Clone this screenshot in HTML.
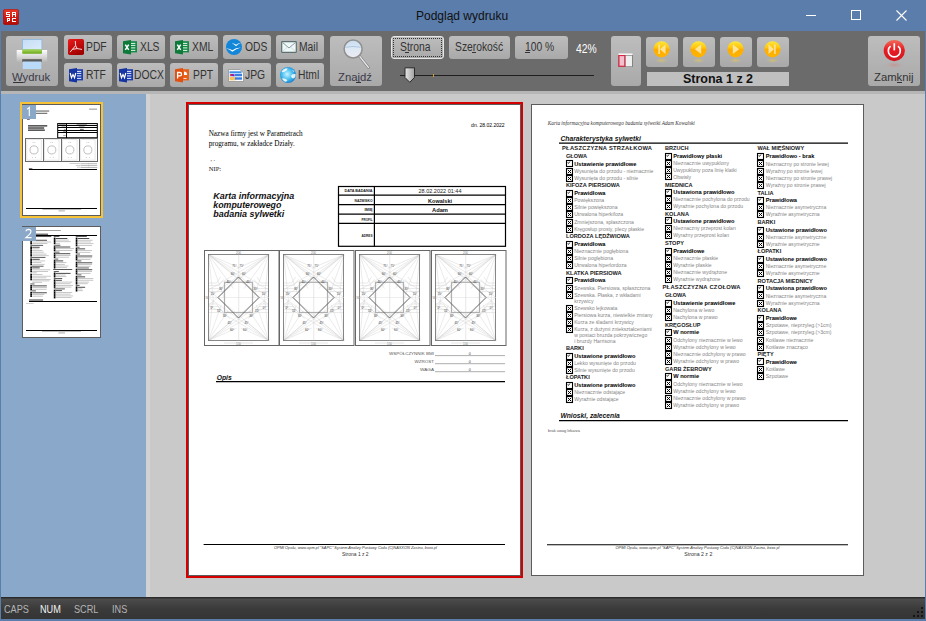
<!DOCTYPE html><html><head><meta charset="utf-8"><style>
*{margin:0;padding:0;box-sizing:border-box}
html,body{width:926px;height:621px;overflow:hidden;background:#5b7dab;font-family:"Liberation Sans",sans-serif}
.a{position:absolute}
#title{left:0;top:0;width:926px;height:31px;background:#5b7dab}
#tb{left:1px;top:31px;width:924px;height:60px;background:#6b6b6b}
.btn{position:absolute;border-radius:3px;background:linear-gradient(#bdbdbd,#a9a9a9);}
.bl{position:absolute;font-size:12px;color:#333;white-space:nowrap;line-height:14px;transform:scaleX(0.86);transform-origin:0 0}
#strip{left:1px;top:91px;width:924px;height:3px;background:#b6b6b6}
#left{left:1px;top:94px;width:145px;height:503px;background:#8aa8c9}
#split{left:146px;top:94px;width:4px;height:503px;background:#d2d2d2}
#main{left:150px;top:94px;width:775px;height:503px;background:#c9c9c9}
#status{left:1px;top:597px;width:924px;height:22px;background:linear-gradient(#2b2b2b 0,#2b2b2b 1px,#4c4c4c 2px,#3a3a3a 12px,#343434 100%)}
.st{position:absolute;top:603px;font-size:11px;color:#b5b5b5;line-height:12px;transform:scaleX(0.83);transform-origin:0 0}
.page{position:absolute;background:#fff;border:1px solid #5a5a5a;width:333px;height:472px;overflow:hidden}
</style></head><body>
<div class="a" id="title"></div>
<svg class="a" style="left:3px;top:9px" width="16" height="16" viewBox="0 0 16 16">
<defs><linearGradient id="ig" x1="0" y1="0" x2="0" y2="1"><stop offset="0" stop-color="#e83a26"/><stop offset="0.5" stop-color="#d41a10"/><stop offset="1" stop-color="#b00c06"/></linearGradient></defs>
<rect x="0.3" y="0.3" width="15.4" height="15.4" rx="2.2" fill="url(#ig)" stroke="#a00a05" stroke-width="0.6"/>
<g fill="#fff" shape-rendering="crispEdges">
<rect x="3" y="3" width="4" height="1"/><rect x="3" y="3" width="1" height="3"/><rect x="3" y="5" width="4" height="1"/><rect x="6" y="5" width="1" height="3"/><rect x="3" y="7" width="4" height="1"/>
<rect x="9" y="3" width="4" height="1"/><rect x="9" y="3" width="1" height="5"/><rect x="12" y="3" width="1" height="5"/><rect x="9" y="5" width="4" height="1"/>
<rect x="4" y="9" width="3" height="1"/><rect x="4" y="9" width="1" height="4"/><rect x="6" y="9" width="1" height="3"/><rect x="4" y="11" width="3" height="1"/>
<rect x="9" y="9" width="4" height="1"/><rect x="9" y="9" width="1" height="4"/><rect x="9" y="12" width="4" height="1"/>
</g></svg>
<div class="a" style="left:416px;top:9px;font-size:12px;color:#101010;line-height:14px;white-space:nowrap">Podgląd wydruku</div>
<div class="a" style="left:806px;top:15px;width:10px;height:1px;background:#fff"></div>
<div class="a" style="left:851px;top:10px;width:10px;height:10px;border:1px solid #fff"></div>
<svg class="a" style="left:896px;top:10px" width="11" height="11" viewBox="0 0 11 11"><path d="M0.5 0.5L10.5 10.5M10.5 0.5L0.5 10.5" stroke="#fff" stroke-width="1.1"/></svg>
<div class="a" id="tb"></div>
<div class="btn" style="left:6px;top:36px;width:52px;height:50px"></div>
<svg class="a" style="left:16px;top:38px" width="32" height="32" viewBox="0 0 32 32">
<defs><linearGradient id="pg1" x1="0" y1="0" x2="0" y2="1"><stop offset="0" stop-color="#fdfdfd"/><stop offset="0.5" stop-color="#dcdcdc"/><stop offset="1" stop-color="#b4b4b4"/></linearGradient>
<linearGradient id="pp" x1="0" y1="0" x2="1" y2="1"><stop offset="0" stop-color="#c4ddf5"/><stop offset="1" stop-color="#dcecfb"/></linearGradient>
<linearGradient id="gr" x1="0" y1="0" x2="0" y2="1"><stop offset="0" stop-color="#a8d860"/><stop offset="1" stop-color="#6aa818"/></linearGradient></defs>
<rect x="0.7" y="12" width="30.4" height="12.2" fill="url(#pg1)"/>
<rect x="6.5" y="1.5" width="19.4" height="10" fill="url(#pp)" stroke="#8cb6de" stroke-width="0.8"/>
<rect x="6.2" y="11.3" width="19.8" height="4.5" rx="0.8" fill="url(#gr)"/>
<rect x="6.2" y="21.2" width="19.6" height="2.8" fill="#5a5a5a"/>
<rect x="6.8" y="23.5" width="18.5" height="7.5" fill="#b9daf9"/>
</svg>
<div class="bl" style="left:12px;top:70px;font-size:11.3px;color:#3a3a4a;transform:none">Wydruk</div>
<div class="a" style="left:13px;top:82px;width:10px;height:1px;background:#333"></div>
<div class="btn" style="left:64px;top:35px;width:48px;height:24px"></div>
<div class="a" style="left:68px;top:39px"><svg width="16" height="16" viewBox="0 0 16 16" style="display:block"><defs><linearGradient id="pdfg" x1="0" y1="0" x2="0.6" y2="1"><stop offset="0" stop-color="#ee1a1a"/><stop offset="1" stop-color="#a00000"/></linearGradient></defs>
<rect x="0" y="0" width="16" height="16" rx="1.8" fill="url(#pdfg)"/>
<path d="M7.3 2 L7.6 6.6 L2 13.2 M7.6 6.6 L9.2 9.6 L14 10.4 M9.2 9.6 L4.5 10.3" stroke="#fff" stroke-width="0.85" fill="none"/></svg></div>
<div class="bl" style="left:86px;top:40px;">PDF</div>
<div class="btn" style="left:117px;top:35px;width:48px;height:24px"></div>
<div class="a" style="left:123px;top:40px"><svg width="14" height="15" viewBox="0 0 14 15" style="display:block">
<path d="M0 1.3L8 0V14.5L0 13.3z" fill="#0d7a3a"/><rect x="8" y="1.2" width="6" height="11.2" fill="#148a45"/>
<g stroke="#fff" stroke-width="0.9"><path d="M8 3.4h4.3M8 5.4h4.3M8 7.9h4.3M8 10.4h4.3"/></g><path d="M2.3 4.6L5.7 9.8M5.7 4.6L2.3 9.8" stroke="#fff" stroke-width="1.5"/></svg></div>
<div class="bl" style="left:140px;top:40px;">XLS</div>
<div class="btn" style="left:170px;top:35px;width:48px;height:24px"></div>
<div class="a" style="left:175px;top:40px"><svg width="14" height="15" viewBox="0 0 14 15" style="display:block">
<path d="M0 1.3L8 0V14.5L0 13.3z" fill="#0d7a3a"/><rect x="8" y="1.2" width="6" height="11.2" fill="#148a45"/>
<g stroke="#fff" stroke-width="0.9"><path d="M8 3.4h4.3M8 5.4h4.3M8 7.9h4.3M8 10.4h4.3"/></g><path d="M2.3 4.6L5.7 9.8M5.7 4.6L2.3 9.8" stroke="#fff" stroke-width="1.5"/></svg></div>
<div class="bl" style="left:192px;top:40px;">XML</div>
<div class="btn" style="left:223px;top:35px;width:48px;height:24px"></div>
<div class="a" style="left:226px;top:39px"><svg width="16" height="16" viewBox="0 0 16 16" style="display:block">
<circle cx="8" cy="8" r="8" fill="#1286d8"/>
<path d="M0.3 9.4 Q4 9.2 6.3 11.2 Q9.5 8.6 15 8.4 Q10 9.8 6.3 12.8 Q4 10.2 0.3 9.4z" fill="#fff"/>
<path d="M5.8 4.6 Q8.3 4.2 10 5.8 Q12 4.1 15 4.1 Q12 5 10 7.2 Q8.3 5.2 5.8 4.6z" fill="#fff"/></svg></div>
<div class="bl" style="left:245px;top:40px;">ODS</div>
<div class="btn" style="left:276px;top:35px;width:48px;height:24px"></div>
<div class="a" style="left:281px;top:41px"><svg width="16" height="12" viewBox="0 0 16 12" style="display:block">
<rect x="0.7" y="0.7" width="14.6" height="10.6" rx="0.6" fill="#eef8f8" stroke="#5d6f6f" stroke-width="1.2"/>
<path d="M1.5 1.5L8 7L14.5 1.5" stroke="#7d8f8f" fill="none" stroke-width="0.9"/>
<path d="M1.5 10.5L6 6.5M14.5 10.5L10 6.5" stroke="#c0cccc" fill="none" stroke-width="0.6"/></svg></div>
<div class="bl" style="left:299px;top:40px;">Mail</div>
<div class="btn" style="left:64px;top:63px;width:48px;height:24px"></div>
<div class="a" style="left:69px;top:68px"><svg width="14" height="15" viewBox="0 0 14 15" style="display:block">
<path d="M0 1.3L8 0V14.5L0 13.3z" fill="#1634a0"/><rect x="8" y="1.2" width="6" height="11.2" fill="#1a3cae"/>
<g stroke="#fff" stroke-width="0.9"><path d="M8 3.4h4.3M8 5.4h4.3M8 7.9h4.3M8 10.4h4.3"/></g><path d="M1.2 5L2.5 9.8L4 6.6L5.5 9.8L6.8 5" stroke="#fff" stroke-width="1.2" fill="none"/></svg></div>
<div class="bl" style="left:86px;top:68px;">RTF</div>
<div class="btn" style="left:117px;top:63px;width:48px;height:24px"></div>
<div class="a" style="left:119px;top:68px"><svg width="14" height="15" viewBox="0 0 14 15" style="display:block">
<path d="M0 1.3L8 0V14.5L0 13.3z" fill="#1634a0"/><rect x="8" y="1.2" width="6" height="11.2" fill="#1a3cae"/>
<g stroke="#fff" stroke-width="0.9"><path d="M8 3.4h4.3M8 5.4h4.3M8 7.9h4.3M8 10.4h4.3"/></g><path d="M1.2 5L2.5 9.8L4 6.6L5.5 9.8L6.8 5" stroke="#fff" stroke-width="1.2" fill="none"/></svg></div>
<div class="bl" style="left:134px;top:68px;">DOCX</div>
<div class="btn" style="left:170px;top:63px;width:48px;height:24px"></div>
<div class="a" style="left:175px;top:68px"><svg width="14" height="15" viewBox="0 0 14 15" style="display:block">
<path d="M0 1.3L8 0V14.5L0 13.3z" fill="#e05010"/><rect x="8" y="1.2" width="6" height="11.2" fill="#e86018"/>
<path d="M9 3.5v3.5h3.2A3.2 3.2 0 0 0 9 3.5z" fill="#fff"/><path d="M8.5 10.5h3" stroke="#fff" stroke-width="0.8"/><path d="M2.6 10.5V4.5h2.3a1.6 1.6 0 0 1 0 3.3H2.6" stroke="#fff" stroke-width="1.3" fill="none"/></svg></div>
<div class="bl" style="left:193px;top:68px;">PPT</div>
<div class="btn" style="left:223px;top:63px;width:48px;height:24px"></div>
<div class="a" style="left:228px;top:69px"><svg width="16" height="13" viewBox="0 0 16 13" style="display:block">
<path d="M0.5 0.5h11.5l3.5 3.5v8.5h-15z" fill="#fafafa" stroke="#8a8a8a" stroke-width="0.7"/>
<rect x="1.5" y="2.3" width="12" height="2" fill="#3a8ee8"/>
<rect x="1.5" y="4.3" width="12.5" height="3.5" fill="#b8d8f8"/><rect x="7" y="5" width="7" height="2" fill="#3a7ee0"/>
<rect x="1.5" y="7.8" width="6" height="3.5" fill="#f4c060"/><rect x="7" y="8.3" width="7" height="2.4" fill="#3a7ee0"/>
<ellipse cx="4" cy="6" rx="2.2" ry="1.1" fill="#c01858"/><ellipse cx="5.5" cy="6.2" rx="1.2" ry="1" fill="#7020d0"/></svg></div>
<div class="bl" style="left:245px;top:68px;">JPG</div>
<div class="btn" style="left:276px;top:63px;width:48px;height:24px"></div>
<div class="a" style="left:280px;top:67px"><svg width="16" height="16" viewBox="0 0 16 16" style="display:block"><defs><radialGradient id="hg" cx="0.45" cy="0.45" r="0.6"><stop offset="0" stop-color="#c8f4ff"/><stop offset="0.55" stop-color="#48bef0"/><stop offset="1" stop-color="#1078c8"/></radialGradient></defs>
<circle cx="8" cy="8" r="8" fill="url(#hg)"/>
<path d="M1.5 5Q3 1.5 7.5 1.2Q8 3 5 4.5Q3 5.5 1.5 5z M11 9Q11.5 6.5 15.5 7Q16 11 13 11.5Q11.5 11 11 9z M2 11.5Q4 10.5 7.5 13Q6.5 15.5 4.5 14.5Q2.5 13 2 11.5z M12 2.5Q14 3.5 14.5 5Q13 5 12 2.5z" fill="#fff" opacity="0.85"/></svg></div>
<div class="bl" style="left:298px;top:68px;">Html</div>
<div class="btn" style="left:330px;top:36px;width:52px;height:50px"></div>
<svg class="a" style="left:340px;top:37px" width="32" height="32" viewBox="0 0 32 32">
<defs><linearGradient id="mg" x1="0" y1="0" x2="0" y2="1"><stop offset="0" stop-color="#c8dcf2"/><stop offset="0.45" stop-color="#dde8f4"/><stop offset="1" stop-color="#ecebf2"/></linearGradient></defs>
<path d="M19.8 19.5L28.5 30.5" stroke="#7a7a7a" stroke-width="2.6" stroke-linecap="round"/>
<path d="M19.8 19.5L28.5 30.5" stroke="#e8e8ee" stroke-width="1.3" stroke-linecap="round"/>
<circle cx="13.1" cy="12" r="9" fill="url(#mg)" stroke="#909090" stroke-width="1.5"/>
<path d="M5.5 10.2Q13 8.8 20.7 10.2" stroke="#9ab8d8" stroke-width="0.7" fill="none"/>
</svg>
<div class="bl" style="left:338px;top:70px;font-size:11.3px;color:#3a3a4a;transform:none">Znajdź</div>
<div class="a" style="left:356px;top:82px;width:5px;height:1px;background:#333"></div>
<div class="btn" style="left:391px;top:36px;width:53px;height:23px;border:1px solid #e6e6e6"></div>
<div class="a" style="left:393px;top:38px;width:49px;height:19px;border:1px dotted #333"></div>
<div class="bl" style="left:400px;top:40px;">Strona</div>
<div class="a" style="left:405px;top:52px;width:4px;height:1px;background:#333"></div>
<div class="btn" style="left:449px;top:36px;width:61px;height:23px"></div>
<div class="bl" style="left:455px;top:40px;">Szerokość</div>
<div class="a" style="left:472px;top:52px;width:4px;height:1px;background:#333"></div>
<div class="btn" style="left:515px;top:36px;width:53px;height:23px"></div>
<div class="bl" style="left:525px;top:40px;">100 %</div>
<div class="a" style="left:525px;top:52px;width:5px;height:1px;background:#333"></div>
<div class="bl" style="left:576px;top:42px;color:#fff">42%</div>
<div class="a" style="left:400px;top:75px;width:194px;height:1px;background:#1e1e1e"></div>
<div class="a" style="left:433px;top:74px;width:1px;height:3px;background:#d8a030"></div>
<svg class="a" style="left:404px;top:67px" width="12" height="16" viewBox="0 0 12 16"><defs><linearGradient id="sl" x1="0" y1="0" x2="1" y2="0"><stop offset="0" stop-color="#e8e8e8"/><stop offset="1" stop-color="#a0a0a0"/></linearGradient></defs><path d="M1 0.8h9.5v9.7l-4.75 4.8l-4.75-4.8z" fill="url(#sl)" stroke="#2a2a2a" stroke-width="1"/></svg>
<div class="btn" style="left:611px;top:36px;width:30px;height:50px"></div>
<svg class="a" style="left:618px;top:53px" width="15" height="15" viewBox="0 0 15 15">
<rect x="0.5" y="0.5" width="14" height="1.4" fill="#fff"/>
<rect x="0.3" y="2" width="14.4" height="12" fill="#707070"/>
<rect x="1" y="2.6" width="5.8" height="10.6" fill="#f2c0cc" stroke="#e81838" stroke-width="1"/>
<rect x="7.7" y="2.6" width="6.3" height="10.8" fill="#eeeeee"/></svg>
<div class="btn" style="left:646px;top:37px;width:32px;height:30px"></div>
<svg class="a" style="left:653px;top:41px" width="17" height="22" viewBox="0 0 17 22">
<defs><linearGradient id="ng0" x1="0" y1="0" x2="0" y2="1"><stop offset="0" stop-color="#ffe83a"/><stop offset="0.42" stop-color="#ffc40a"/><stop offset="0.5" stop-color="#ffac00"/><stop offset="1" stop-color="#ffb400"/></linearGradient>
<radialGradient id="nr0" cx="0.5" cy="0.5" r="0.5"><stop offset="0" stop-color="#e8c848" stop-opacity="0.6"/><stop offset="1" stop-color="#d0c080" stop-opacity="0"/></radialGradient></defs>
<ellipse cx="8.5" cy="19.5" rx="7" ry="2.6" fill="url(#nr0)"/>
<circle cx="8.5" cy="8.3" r="8.1" fill="url(#ng0)"/><path d="M5.3 3.5h1.6v9.4h-1.6zM12.5 3.5L7 8.2L12.5 12.9z" fill="#ffe9a8" opacity="0.9"/></svg>
<div class="btn" style="left:683px;top:37px;width:32px;height:30px"></div>
<svg class="a" style="left:690px;top:41px" width="17" height="22" viewBox="0 0 17 22">
<defs><linearGradient id="ng1" x1="0" y1="0" x2="0" y2="1"><stop offset="0" stop-color="#ffe83a"/><stop offset="0.42" stop-color="#ffc40a"/><stop offset="0.5" stop-color="#ffac00"/><stop offset="1" stop-color="#ffb400"/></linearGradient>
<radialGradient id="nr1" cx="0.5" cy="0.5" r="0.5"><stop offset="0" stop-color="#e8c848" stop-opacity="0.6"/><stop offset="1" stop-color="#d0c080" stop-opacity="0"/></radialGradient></defs>
<ellipse cx="8.5" cy="19.5" rx="7" ry="2.6" fill="url(#nr1)"/>
<circle cx="8.5" cy="8.3" r="8.1" fill="url(#ng1)"/><path d="M11.2 3.5L4.8 8.2L11.2 12.9z" fill="#ffe9a8" opacity="0.9"/></svg>
<div class="btn" style="left:720px;top:37px;width:32px;height:30px"></div>
<svg class="a" style="left:727px;top:41px" width="17" height="22" viewBox="0 0 17 22">
<defs><linearGradient id="ng2" x1="0" y1="0" x2="0" y2="1"><stop offset="0" stop-color="#ffe83a"/><stop offset="0.42" stop-color="#ffc40a"/><stop offset="0.5" stop-color="#ffac00"/><stop offset="1" stop-color="#ffb400"/></linearGradient>
<radialGradient id="nr2" cx="0.5" cy="0.5" r="0.5"><stop offset="0" stop-color="#e8c848" stop-opacity="0.6"/><stop offset="1" stop-color="#d0c080" stop-opacity="0"/></radialGradient></defs>
<ellipse cx="8.5" cy="19.5" rx="7" ry="2.6" fill="url(#nr2)"/>
<circle cx="8.5" cy="8.3" r="8.1" fill="url(#ng2)"/><path d="M5.8 3.5L12.2 8.2L5.8 12.9z" fill="#ffe9a8" opacity="0.9"/></svg>
<div class="btn" style="left:757px;top:37px;width:32px;height:30px"></div>
<svg class="a" style="left:764px;top:41px" width="17" height="22" viewBox="0 0 17 22">
<defs><linearGradient id="ng3" x1="0" y1="0" x2="0" y2="1"><stop offset="0" stop-color="#ffe83a"/><stop offset="0.42" stop-color="#ffc40a"/><stop offset="0.5" stop-color="#ffac00"/><stop offset="1" stop-color="#ffb400"/></linearGradient>
<radialGradient id="nr3" cx="0.5" cy="0.5" r="0.5"><stop offset="0" stop-color="#e8c848" stop-opacity="0.6"/><stop offset="1" stop-color="#d0c080" stop-opacity="0"/></radialGradient></defs>
<ellipse cx="8.5" cy="19.5" rx="7" ry="2.6" fill="url(#nr3)"/>
<circle cx="8.5" cy="8.3" r="8.1" fill="url(#ng3)"/><path d="M10.1 3.5h1.6v9.4h-1.6zM4.5 3.5L10 8.2L4.5 12.9z" fill="#ffe9a8" opacity="0.9"/></svg>
<div class="a" style="left:647px;top:72px;width:142px;height:14px;background:#bfbfbf"></div>
<div class="a" style="left:647px;top:72px;width:142px;height:14px;font-size:12.5px;font-weight:bold;color:#111;text-align:center;line-height:14px">Strona 1 z 2</div>
<div class="btn" style="left:868px;top:36px;width:52px;height:50px"></div>
<svg class="a" style="left:882px;top:38px" width="25" height="30" viewBox="0 0 25 30">
<defs><linearGradient id="rg" x1="0" y1="0" x2="0" y2="1"><stop offset="0" stop-color="#f26a58"/><stop offset="0.45" stop-color="#e81c24"/><stop offset="1" stop-color="#d2161e"/></linearGradient>
<radialGradient id="rr" cx="0.5" cy="0.5" r="0.5"><stop offset="0" stop-color="#d0807a" stop-opacity="0.55"/><stop offset="1" stop-color="#c0a0a0" stop-opacity="0"/></radialGradient></defs>
<ellipse cx="12.3" cy="27" rx="9.5" ry="3.2" fill="url(#rr)"/>
<circle cx="12.3" cy="12.6" r="10.6" fill="url(#rg)"/>
<path d="M8.6 8.2A6 6 0 1 0 16 8.2" stroke="#fff" stroke-width="1.7" fill="none"/>
<path d="M12.3 5.2V12.4" stroke="#fff" stroke-width="1.7"/></svg>
<div class="bl" style="left:874px;top:70px;font-size:11.3px;color:#333;transform:none">Zamknij</div>
<div class="a" style="left:897px;top:82px;width:5px;height:1px;background:#333"></div>
<div class="a" id="strip"></div>
<div class="a" id="left"></div>
<div class="a" id="split"></div>
<div class="a" id="main"></div>
<div class="a" style="left:186px;top:102px;width:337px;height:476px;border:2px solid #d40000"></div>
<svg class="a" style="left:188px;top:104px" width="333" height="472" viewBox="0 0 333 472">
<rect x="0.5" y="0.5" width="332" height="471" fill="#fff" stroke="#5c5c5c" stroke-width="1"/>
<text x="316.6" y="23" font-family="Liberation Sans" font-size="4.8" font-weight="normal" font-style="normal" fill="#000" text-anchor="end" textLength="33.5" lengthAdjust="spacingAndGlyphs">dn. 28.02.2022</text>
<text x="20.7" y="32" font-family="Liberation Serif" font-size="7.4" font-weight="normal" font-style="normal" fill="#000" text-anchor="start" textLength="94" lengthAdjust="spacingAndGlyphs">Nazwa firmy jest w Parametrach</text>
<text x="20.7" y="41.6" font-family="Liberation Serif" font-size="7.4" font-weight="normal" font-style="normal" fill="#000" text-anchor="start" textLength="86" lengthAdjust="spacingAndGlyphs">programu, w zakładce Działy.</text>
<text x="22.5" y="57" font-family="Liberation Serif" font-size="6" font-weight="normal" font-style="normal" fill="#333" text-anchor="start">, .</text>
<text x="20.7" y="67" font-family="Liberation Serif" font-size="6.6" font-weight="normal" font-style="normal" fill="#111" text-anchor="start" textLength="12.5" lengthAdjust="spacingAndGlyphs">NIP:</text>
<text x="25.3" y="94.9" font-family="Liberation Sans" font-size="9" font-weight="bold" font-style="italic" fill="#111" text-anchor="start" textLength="81" lengthAdjust="spacingAndGlyphs">Karta informacyjna</text>
<text x="25.3" y="104" font-family="Liberation Sans" font-size="9" font-weight="bold" font-style="italic" fill="#111" text-anchor="start" textLength="68" lengthAdjust="spacingAndGlyphs">komputerowego</text>
<text x="25.3" y="113" font-family="Liberation Sans" font-size="9" font-weight="bold" font-style="italic" fill="#111" text-anchor="start" textLength="71" lengthAdjust="spacingAndGlyphs">badania sylwetki</text>
<rect x="150.5" y="82.5" width="167.0" height="59.80000000000001" fill="none" stroke="#000" stroke-width="1.2"/>
<line x1="186.4" y1="82.5" x2="186.4" y2="142.3" stroke="#000" stroke-width="1.2"/>
<line x1="150.5" y1="91.2" x2="317.5" y2="91.2" stroke="#000" stroke-width="1.2"/>
<line x1="150.5" y1="100.6" x2="317.5" y2="100.6" stroke="#000" stroke-width="1.2"/>
<line x1="150.5" y1="110.1" x2="317.5" y2="110.1" stroke="#000" stroke-width="1.2"/>
<line x1="150.5" y1="119.3" x2="317.5" y2="119.3" stroke="#000" stroke-width="1.2"/>
<text x="184.5" y="88.4" font-family="Liberation Sans" font-size="3.3" font-weight="bold" font-style="normal" fill="#222" text-anchor="end" textLength="28" lengthAdjust="spacingAndGlyphs">DATA BADANIA</text>
<text x="184.5" y="97.7" font-family="Liberation Sans" font-size="3.3" font-weight="bold" font-style="normal" fill="#222" text-anchor="end" textLength="18" lengthAdjust="spacingAndGlyphs">NAZWISKO</text>
<text x="184.5" y="107.2" font-family="Liberation Sans" font-size="3.3" font-weight="bold" font-style="normal" fill="#222" text-anchor="end" textLength="8" lengthAdjust="spacingAndGlyphs">IMIĘ</text>
<text x="184.5" y="116.5" font-family="Liberation Sans" font-size="3.3" font-weight="bold" font-style="normal" fill="#222" text-anchor="end" textLength="11" lengthAdjust="spacingAndGlyphs">PROFIL</text>
<text x="184.5" y="132.5" font-family="Liberation Sans" font-size="3.3" font-weight="bold" font-style="normal" fill="#222" text-anchor="end" textLength="11" lengthAdjust="spacingAndGlyphs">ADRES</text>
<text x="252" y="89.3" font-family="Liberation Sans" font-size="5.4" font-weight="normal" font-style="normal" fill="#222" text-anchor="middle" textLength="43" lengthAdjust="spacingAndGlyphs">28.02.2022 01:44</text>
<text x="252" y="98.8" font-family="Liberation Sans" font-size="5.4" font-weight="bold" font-style="normal" fill="#111" text-anchor="middle" textLength="24" lengthAdjust="spacingAndGlyphs">Kowalski</text>
<text x="252" y="108.2" font-family="Liberation Sans" font-size="5.4" font-weight="bold" font-style="normal" fill="#111" text-anchor="middle" textLength="16" lengthAdjust="spacingAndGlyphs">Adam</text>
<g transform="translate(16,146)">
<rect x="0.5" y="0.5" width="74.5" height="95" fill="#fff" stroke="#666" stroke-width="1"/>
<path d="M4.5 4.5L36.9 18.5 M65 4.5L32.6 18.5 M4.5 4.5L34.9 28.6 M65 4.5L34.6 28.6 M4.5 4.5L29.5 38.6 M65 4.5L40.0 38.6 M4.5 4.5L20.1 47.6 M65 4.5L49.4 47.6 M4.5 4.5L9.8 53.9 M65 4.5L59.8 53.9 M4.5 90.5L8.6 51.0 M65 90.5L60.9 51.0 M4.5 90.5L17.2 55.0 M65 90.5L52.3 55.0 M4.5 90.5L24.1 60.7 M65 90.5L45.4 60.7 M4.5 90.5L29.8 69.4 M65 90.5L39.7 69.4 M4.5 90.5L32.7 78.1 M65 90.5L36.8 78.1 M4.5 4.5L65 40 M4.5 4.5L65 47.5 M4.5 4.5L65 55 M65 4.5L4.5 40 M65 4.5L4.5 47.5 M65 4.5L4.5 55 M4.5 90.5L65 40 M4.5 90.5L65 47.5 M4.5 90.5L65 55 M65 90.5L4.5 40 M65 90.5L4.5 47.5 M65 90.5L4.5 55" stroke="#cdcdcd" stroke-width="0.4" fill="none"/>
<path d="M4.5 33L12.5 33L16.5 27 M65 33L57 33L53 27 M4.5 35.5L14.5 35.5L19.5 29.5 M65 35.5L55 35.5L50 29.5 M4.5 38.5L16.5 38.5L22.5 32.5 M65 38.5L53 38.5L47 32.5 M4.5 41.5L18.5 41.5L25.5 35.5 M65 41.5L51 41.5L44 35.5 M4.5 54L12.5 54L16.5 60 M65 54L57 54L53 60 M4.5 56.5L14.5 56.5L19.5 62.5 M65 56.5L55 56.5L50 62.5 M4.5 59.5L16.5 59.5L22.5 65.5 M65 59.5L53 59.5L47 65.5 M4.5 62.5L18.5 62.5L25.5 68.5 M65 62.5L51 62.5L44 68.5" stroke="#d0d0d0" stroke-width="0.45" fill="none"/>
<rect x="4.5" y="4.5" width="60" height="86" fill="none" stroke="#6a6a6a" stroke-width="0.8"/>
<line x1="34.75" y1="4.5" x2="34.75" y2="90.5" stroke="#cfcfcf" stroke-width="0.5"/>
<line x1="4.5" y1="47.5" x2="65" y2="47.5" stroke="#dcdcdc" stroke-width="0.5"/>
<rect x="20.5" y="32.3" width="28" height="30.2" fill="none" stroke="#b0b0b0" stroke-width="1.2"/>
<path d="M34.5 27L55 47.5L34.5 68L14 47.5z" fill="none" stroke="#5a5a5a" stroke-width="0.9"/>
<text x="30.4" y="16.8" font-family="Liberation Sans" font-size="2.8" font-weight="normal" font-style="normal" fill="#333" text-anchor="middle">75°</text>
<text x="37.7" y="16.8" font-family="Liberation Sans" font-size="2.8" font-weight="normal" font-style="normal" fill="#333" text-anchor="middle">75°</text>
<text x="28.8" y="24.900000000000002" font-family="Liberation Sans" font-size="2.8" font-weight="normal" font-style="normal" fill="#333" text-anchor="middle">60°</text>
<text x="40" y="24.900000000000002" font-family="Liberation Sans" font-size="2.8" font-weight="normal" font-style="normal" fill="#333" text-anchor="middle">60°</text>
<text x="24.5" y="32.9" font-family="Liberation Sans" font-size="2.8" font-weight="normal" font-style="normal" fill="#333" text-anchor="middle">45°</text>
<text x="44.4" y="32.9" font-family="Liberation Sans" font-size="2.8" font-weight="normal" font-style="normal" fill="#333" text-anchor="middle">45°</text>
<text x="17" y="40.1" font-family="Liberation Sans" font-size="2.8" font-weight="normal" font-style="normal" fill="#333" text-anchor="middle">30°</text>
<text x="51.4" y="40.1" font-family="Liberation Sans" font-size="2.8" font-weight="normal" font-style="normal" fill="#333" text-anchor="middle">30°</text>
<text x="8.7" y="45.1" font-family="Liberation Sans" font-size="2.8" font-weight="normal" font-style="normal" fill="#333" text-anchor="middle">15°</text>
<text x="59.9" y="45.1" font-family="Liberation Sans" font-size="2.8" font-weight="normal" font-style="normal" fill="#333" text-anchor="middle">15°</text>
<text x="7.9" y="58.7" font-family="Liberation Sans" font-size="2.8" font-weight="normal" font-style="normal" fill="#333" text-anchor="middle">0°</text>
<text x="60.2" y="58.7" font-family="Liberation Sans" font-size="2.8" font-weight="normal" font-style="normal" fill="#333" text-anchor="middle">0°</text>
<text x="15.1" y="62.0" font-family="Liberation Sans" font-size="2.8" font-weight="normal" font-style="normal" fill="#333" text-anchor="middle">15°</text>
<text x="53" y="62.0" font-family="Liberation Sans" font-size="2.8" font-weight="normal" font-style="normal" fill="#333" text-anchor="middle">15°</text>
<text x="20.8" y="66.8" font-family="Liberation Sans" font-size="2.8" font-weight="normal" font-style="normal" fill="#333" text-anchor="middle">30°</text>
<text x="47.3" y="66.8" font-family="Liberation Sans" font-size="2.8" font-weight="normal" font-style="normal" fill="#333" text-anchor="middle">30°</text>
<text x="25.6" y="74.0" font-family="Liberation Sans" font-size="2.8" font-weight="normal" font-style="normal" fill="#333" text-anchor="middle">45°</text>
<text x="42.5" y="74.0" font-family="Liberation Sans" font-size="2.8" font-weight="normal" font-style="normal" fill="#333" text-anchor="middle">45°</text>
<text x="28" y="81.3" font-family="Liberation Sans" font-size="2.8" font-weight="normal" font-style="normal" fill="#333" text-anchor="middle">60°</text>
<text x="41.2" y="81.3" font-family="Liberation Sans" font-size="2.8" font-weight="normal" font-style="normal" fill="#333" text-anchor="middle">60°</text>
<text x="34.5" y="3.6" font-family="Liberation Sans" font-size="3" font-weight="normal" font-style="normal" fill="#777" text-anchor="middle">200</text>
<text x="34.5" y="94.6" font-family="Liberation Sans" font-size="3" font-weight="normal" font-style="normal" fill="#777" text-anchor="middle">150</text>
<line x1="20" y1="93" x2="49" y2="93" stroke="#bbb" stroke-width="0.4"/>
<text x="1.5" y="49" font-family="Liberation Sans" font-size="3" font-weight="normal" font-style="normal" fill="#777" text-anchor="start">W</text>
</g>
<g transform="translate(91,146)">
<rect x="0.5" y="0.5" width="74.5" height="95" fill="#fff" stroke="#666" stroke-width="1"/>
<path d="M4.5 4.5L36.9 18.5 M65 4.5L32.6 18.5 M4.5 4.5L34.9 28.6 M65 4.5L34.6 28.6 M4.5 4.5L29.5 38.6 M65 4.5L40.0 38.6 M4.5 4.5L20.1 47.6 M65 4.5L49.4 47.6 M4.5 4.5L9.8 53.9 M65 4.5L59.8 53.9 M4.5 90.5L8.6 51.0 M65 90.5L60.9 51.0 M4.5 90.5L17.2 55.0 M65 90.5L52.3 55.0 M4.5 90.5L24.1 60.7 M65 90.5L45.4 60.7 M4.5 90.5L29.8 69.4 M65 90.5L39.7 69.4 M4.5 90.5L32.7 78.1 M65 90.5L36.8 78.1 M4.5 4.5L65 40 M4.5 4.5L65 47.5 M4.5 4.5L65 55 M65 4.5L4.5 40 M65 4.5L4.5 47.5 M65 4.5L4.5 55 M4.5 90.5L65 40 M4.5 90.5L65 47.5 M4.5 90.5L65 55 M65 90.5L4.5 40 M65 90.5L4.5 47.5 M65 90.5L4.5 55" stroke="#cdcdcd" stroke-width="0.4" fill="none"/>
<path d="M4.5 33L12.5 33L16.5 27 M65 33L57 33L53 27 M4.5 35.5L14.5 35.5L19.5 29.5 M65 35.5L55 35.5L50 29.5 M4.5 38.5L16.5 38.5L22.5 32.5 M65 38.5L53 38.5L47 32.5 M4.5 41.5L18.5 41.5L25.5 35.5 M65 41.5L51 41.5L44 35.5 M4.5 54L12.5 54L16.5 60 M65 54L57 54L53 60 M4.5 56.5L14.5 56.5L19.5 62.5 M65 56.5L55 56.5L50 62.5 M4.5 59.5L16.5 59.5L22.5 65.5 M65 59.5L53 59.5L47 65.5 M4.5 62.5L18.5 62.5L25.5 68.5 M65 62.5L51 62.5L44 68.5" stroke="#d0d0d0" stroke-width="0.45" fill="none"/>
<rect x="4.5" y="4.5" width="60" height="86" fill="none" stroke="#6a6a6a" stroke-width="0.8"/>
<line x1="34.75" y1="4.5" x2="34.75" y2="90.5" stroke="#cfcfcf" stroke-width="0.5"/>
<line x1="4.5" y1="47.5" x2="65" y2="47.5" stroke="#dcdcdc" stroke-width="0.5"/>
<rect x="20.5" y="32.3" width="28" height="30.2" fill="none" stroke="#b0b0b0" stroke-width="1.2"/>
<path d="M34.5 27L55 47.5L34.5 68L14 47.5z" fill="none" stroke="#5a5a5a" stroke-width="0.9"/>
<text x="30.4" y="16.8" font-family="Liberation Sans" font-size="2.8" font-weight="normal" font-style="normal" fill="#333" text-anchor="middle">75°</text>
<text x="37.7" y="16.8" font-family="Liberation Sans" font-size="2.8" font-weight="normal" font-style="normal" fill="#333" text-anchor="middle">75°</text>
<text x="28.8" y="24.900000000000002" font-family="Liberation Sans" font-size="2.8" font-weight="normal" font-style="normal" fill="#333" text-anchor="middle">60°</text>
<text x="40" y="24.900000000000002" font-family="Liberation Sans" font-size="2.8" font-weight="normal" font-style="normal" fill="#333" text-anchor="middle">60°</text>
<text x="24.5" y="32.9" font-family="Liberation Sans" font-size="2.8" font-weight="normal" font-style="normal" fill="#333" text-anchor="middle">45°</text>
<text x="44.4" y="32.9" font-family="Liberation Sans" font-size="2.8" font-weight="normal" font-style="normal" fill="#333" text-anchor="middle">45°</text>
<text x="17" y="40.1" font-family="Liberation Sans" font-size="2.8" font-weight="normal" font-style="normal" fill="#333" text-anchor="middle">30°</text>
<text x="51.4" y="40.1" font-family="Liberation Sans" font-size="2.8" font-weight="normal" font-style="normal" fill="#333" text-anchor="middle">30°</text>
<text x="8.7" y="45.1" font-family="Liberation Sans" font-size="2.8" font-weight="normal" font-style="normal" fill="#333" text-anchor="middle">15°</text>
<text x="59.9" y="45.1" font-family="Liberation Sans" font-size="2.8" font-weight="normal" font-style="normal" fill="#333" text-anchor="middle">15°</text>
<text x="7.9" y="58.7" font-family="Liberation Sans" font-size="2.8" font-weight="normal" font-style="normal" fill="#333" text-anchor="middle">0°</text>
<text x="60.2" y="58.7" font-family="Liberation Sans" font-size="2.8" font-weight="normal" font-style="normal" fill="#333" text-anchor="middle">0°</text>
<text x="15.1" y="62.0" font-family="Liberation Sans" font-size="2.8" font-weight="normal" font-style="normal" fill="#333" text-anchor="middle">15°</text>
<text x="53" y="62.0" font-family="Liberation Sans" font-size="2.8" font-weight="normal" font-style="normal" fill="#333" text-anchor="middle">15°</text>
<text x="20.8" y="66.8" font-family="Liberation Sans" font-size="2.8" font-weight="normal" font-style="normal" fill="#333" text-anchor="middle">30°</text>
<text x="47.3" y="66.8" font-family="Liberation Sans" font-size="2.8" font-weight="normal" font-style="normal" fill="#333" text-anchor="middle">30°</text>
<text x="25.6" y="74.0" font-family="Liberation Sans" font-size="2.8" font-weight="normal" font-style="normal" fill="#333" text-anchor="middle">45°</text>
<text x="42.5" y="74.0" font-family="Liberation Sans" font-size="2.8" font-weight="normal" font-style="normal" fill="#333" text-anchor="middle">45°</text>
<text x="28" y="81.3" font-family="Liberation Sans" font-size="2.8" font-weight="normal" font-style="normal" fill="#333" text-anchor="middle">60°</text>
<text x="41.2" y="81.3" font-family="Liberation Sans" font-size="2.8" font-weight="normal" font-style="normal" fill="#333" text-anchor="middle">60°</text>
<text x="34.5" y="3.6" font-family="Liberation Sans" font-size="3" font-weight="normal" font-style="normal" fill="#777" text-anchor="middle">200</text>
<text x="34.5" y="94.6" font-family="Liberation Sans" font-size="3" font-weight="normal" font-style="normal" fill="#777" text-anchor="middle">150</text>
<line x1="20" y1="93" x2="49" y2="93" stroke="#bbb" stroke-width="0.4"/>
<text x="1.5" y="49" font-family="Liberation Sans" font-size="3" font-weight="normal" font-style="normal" fill="#777" text-anchor="start">W</text>
</g>
<g transform="translate(167,146)">
<rect x="0.5" y="0.5" width="74.5" height="95" fill="#fff" stroke="#666" stroke-width="1"/>
<path d="M4.5 4.5L36.9 18.5 M65 4.5L32.6 18.5 M4.5 4.5L34.9 28.6 M65 4.5L34.6 28.6 M4.5 4.5L29.5 38.6 M65 4.5L40.0 38.6 M4.5 4.5L20.1 47.6 M65 4.5L49.4 47.6 M4.5 4.5L9.8 53.9 M65 4.5L59.8 53.9 M4.5 90.5L8.6 51.0 M65 90.5L60.9 51.0 M4.5 90.5L17.2 55.0 M65 90.5L52.3 55.0 M4.5 90.5L24.1 60.7 M65 90.5L45.4 60.7 M4.5 90.5L29.8 69.4 M65 90.5L39.7 69.4 M4.5 90.5L32.7 78.1 M65 90.5L36.8 78.1 M4.5 4.5L65 40 M4.5 4.5L65 47.5 M4.5 4.5L65 55 M65 4.5L4.5 40 M65 4.5L4.5 47.5 M65 4.5L4.5 55 M4.5 90.5L65 40 M4.5 90.5L65 47.5 M4.5 90.5L65 55 M65 90.5L4.5 40 M65 90.5L4.5 47.5 M65 90.5L4.5 55" stroke="#cdcdcd" stroke-width="0.4" fill="none"/>
<path d="M4.5 33L12.5 33L16.5 27 M65 33L57 33L53 27 M4.5 35.5L14.5 35.5L19.5 29.5 M65 35.5L55 35.5L50 29.5 M4.5 38.5L16.5 38.5L22.5 32.5 M65 38.5L53 38.5L47 32.5 M4.5 41.5L18.5 41.5L25.5 35.5 M65 41.5L51 41.5L44 35.5 M4.5 54L12.5 54L16.5 60 M65 54L57 54L53 60 M4.5 56.5L14.5 56.5L19.5 62.5 M65 56.5L55 56.5L50 62.5 M4.5 59.5L16.5 59.5L22.5 65.5 M65 59.5L53 59.5L47 65.5 M4.5 62.5L18.5 62.5L25.5 68.5 M65 62.5L51 62.5L44 68.5" stroke="#d0d0d0" stroke-width="0.45" fill="none"/>
<rect x="4.5" y="4.5" width="60" height="86" fill="none" stroke="#6a6a6a" stroke-width="0.8"/>
<line x1="34.75" y1="4.5" x2="34.75" y2="90.5" stroke="#cfcfcf" stroke-width="0.5"/>
<line x1="4.5" y1="47.5" x2="65" y2="47.5" stroke="#dcdcdc" stroke-width="0.5"/>
<rect x="20.5" y="32.3" width="28" height="30.2" fill="none" stroke="#b0b0b0" stroke-width="1.2"/>
<path d="M34.5 27L55 47.5L34.5 68L14 47.5z" fill="none" stroke="#5a5a5a" stroke-width="0.9"/>
<text x="30.4" y="16.8" font-family="Liberation Sans" font-size="2.8" font-weight="normal" font-style="normal" fill="#333" text-anchor="middle">75°</text>
<text x="37.7" y="16.8" font-family="Liberation Sans" font-size="2.8" font-weight="normal" font-style="normal" fill="#333" text-anchor="middle">75°</text>
<text x="28.8" y="24.900000000000002" font-family="Liberation Sans" font-size="2.8" font-weight="normal" font-style="normal" fill="#333" text-anchor="middle">60°</text>
<text x="40" y="24.900000000000002" font-family="Liberation Sans" font-size="2.8" font-weight="normal" font-style="normal" fill="#333" text-anchor="middle">60°</text>
<text x="24.5" y="32.9" font-family="Liberation Sans" font-size="2.8" font-weight="normal" font-style="normal" fill="#333" text-anchor="middle">45°</text>
<text x="44.4" y="32.9" font-family="Liberation Sans" font-size="2.8" font-weight="normal" font-style="normal" fill="#333" text-anchor="middle">45°</text>
<text x="17" y="40.1" font-family="Liberation Sans" font-size="2.8" font-weight="normal" font-style="normal" fill="#333" text-anchor="middle">30°</text>
<text x="51.4" y="40.1" font-family="Liberation Sans" font-size="2.8" font-weight="normal" font-style="normal" fill="#333" text-anchor="middle">30°</text>
<text x="8.7" y="45.1" font-family="Liberation Sans" font-size="2.8" font-weight="normal" font-style="normal" fill="#333" text-anchor="middle">15°</text>
<text x="59.9" y="45.1" font-family="Liberation Sans" font-size="2.8" font-weight="normal" font-style="normal" fill="#333" text-anchor="middle">15°</text>
<text x="7.9" y="58.7" font-family="Liberation Sans" font-size="2.8" font-weight="normal" font-style="normal" fill="#333" text-anchor="middle">0°</text>
<text x="60.2" y="58.7" font-family="Liberation Sans" font-size="2.8" font-weight="normal" font-style="normal" fill="#333" text-anchor="middle">0°</text>
<text x="15.1" y="62.0" font-family="Liberation Sans" font-size="2.8" font-weight="normal" font-style="normal" fill="#333" text-anchor="middle">15°</text>
<text x="53" y="62.0" font-family="Liberation Sans" font-size="2.8" font-weight="normal" font-style="normal" fill="#333" text-anchor="middle">15°</text>
<text x="20.8" y="66.8" font-family="Liberation Sans" font-size="2.8" font-weight="normal" font-style="normal" fill="#333" text-anchor="middle">30°</text>
<text x="47.3" y="66.8" font-family="Liberation Sans" font-size="2.8" font-weight="normal" font-style="normal" fill="#333" text-anchor="middle">30°</text>
<text x="25.6" y="74.0" font-family="Liberation Sans" font-size="2.8" font-weight="normal" font-style="normal" fill="#333" text-anchor="middle">45°</text>
<text x="42.5" y="74.0" font-family="Liberation Sans" font-size="2.8" font-weight="normal" font-style="normal" fill="#333" text-anchor="middle">45°</text>
<text x="28" y="81.3" font-family="Liberation Sans" font-size="2.8" font-weight="normal" font-style="normal" fill="#333" text-anchor="middle">60°</text>
<text x="41.2" y="81.3" font-family="Liberation Sans" font-size="2.8" font-weight="normal" font-style="normal" fill="#333" text-anchor="middle">60°</text>
<text x="34.5" y="3.6" font-family="Liberation Sans" font-size="3" font-weight="normal" font-style="normal" fill="#777" text-anchor="middle">200</text>
<text x="34.5" y="94.6" font-family="Liberation Sans" font-size="3" font-weight="normal" font-style="normal" fill="#777" text-anchor="middle">150</text>
<line x1="20" y1="93" x2="49" y2="93" stroke="#bbb" stroke-width="0.4"/>
<text x="1.5" y="49" font-family="Liberation Sans" font-size="3" font-weight="normal" font-style="normal" fill="#777" text-anchor="start">W</text>
</g>
<g transform="translate(243,146)">
<rect x="0.5" y="0.5" width="74.5" height="95" fill="#fff" stroke="#666" stroke-width="1"/>
<path d="M4.5 4.5L36.9 18.5 M65 4.5L32.6 18.5 M4.5 4.5L34.9 28.6 M65 4.5L34.6 28.6 M4.5 4.5L29.5 38.6 M65 4.5L40.0 38.6 M4.5 4.5L20.1 47.6 M65 4.5L49.4 47.6 M4.5 4.5L9.8 53.9 M65 4.5L59.8 53.9 M4.5 90.5L8.6 51.0 M65 90.5L60.9 51.0 M4.5 90.5L17.2 55.0 M65 90.5L52.3 55.0 M4.5 90.5L24.1 60.7 M65 90.5L45.4 60.7 M4.5 90.5L29.8 69.4 M65 90.5L39.7 69.4 M4.5 90.5L32.7 78.1 M65 90.5L36.8 78.1 M4.5 4.5L65 40 M4.5 4.5L65 47.5 M4.5 4.5L65 55 M65 4.5L4.5 40 M65 4.5L4.5 47.5 M65 4.5L4.5 55 M4.5 90.5L65 40 M4.5 90.5L65 47.5 M4.5 90.5L65 55 M65 90.5L4.5 40 M65 90.5L4.5 47.5 M65 90.5L4.5 55" stroke="#cdcdcd" stroke-width="0.4" fill="none"/>
<path d="M4.5 33L12.5 33L16.5 27 M65 33L57 33L53 27 M4.5 35.5L14.5 35.5L19.5 29.5 M65 35.5L55 35.5L50 29.5 M4.5 38.5L16.5 38.5L22.5 32.5 M65 38.5L53 38.5L47 32.5 M4.5 41.5L18.5 41.5L25.5 35.5 M65 41.5L51 41.5L44 35.5 M4.5 54L12.5 54L16.5 60 M65 54L57 54L53 60 M4.5 56.5L14.5 56.5L19.5 62.5 M65 56.5L55 56.5L50 62.5 M4.5 59.5L16.5 59.5L22.5 65.5 M65 59.5L53 59.5L47 65.5 M4.5 62.5L18.5 62.5L25.5 68.5 M65 62.5L51 62.5L44 68.5" stroke="#d0d0d0" stroke-width="0.45" fill="none"/>
<rect x="4.5" y="4.5" width="60" height="86" fill="none" stroke="#6a6a6a" stroke-width="0.8"/>
<line x1="34.75" y1="4.5" x2="34.75" y2="90.5" stroke="#cfcfcf" stroke-width="0.5"/>
<line x1="4.5" y1="47.5" x2="65" y2="47.5" stroke="#dcdcdc" stroke-width="0.5"/>
<rect x="20.5" y="32.3" width="28" height="30.2" fill="none" stroke="#b0b0b0" stroke-width="1.2"/>
<path d="M34.5 27L55 47.5L34.5 68L14 47.5z" fill="none" stroke="#5a5a5a" stroke-width="0.9"/>
<text x="30.4" y="16.8" font-family="Liberation Sans" font-size="2.8" font-weight="normal" font-style="normal" fill="#333" text-anchor="middle">75°</text>
<text x="37.7" y="16.8" font-family="Liberation Sans" font-size="2.8" font-weight="normal" font-style="normal" fill="#333" text-anchor="middle">75°</text>
<text x="28.8" y="24.900000000000002" font-family="Liberation Sans" font-size="2.8" font-weight="normal" font-style="normal" fill="#333" text-anchor="middle">60°</text>
<text x="40" y="24.900000000000002" font-family="Liberation Sans" font-size="2.8" font-weight="normal" font-style="normal" fill="#333" text-anchor="middle">60°</text>
<text x="24.5" y="32.9" font-family="Liberation Sans" font-size="2.8" font-weight="normal" font-style="normal" fill="#333" text-anchor="middle">45°</text>
<text x="44.4" y="32.9" font-family="Liberation Sans" font-size="2.8" font-weight="normal" font-style="normal" fill="#333" text-anchor="middle">45°</text>
<text x="17" y="40.1" font-family="Liberation Sans" font-size="2.8" font-weight="normal" font-style="normal" fill="#333" text-anchor="middle">30°</text>
<text x="51.4" y="40.1" font-family="Liberation Sans" font-size="2.8" font-weight="normal" font-style="normal" fill="#333" text-anchor="middle">30°</text>
<text x="8.7" y="45.1" font-family="Liberation Sans" font-size="2.8" font-weight="normal" font-style="normal" fill="#333" text-anchor="middle">15°</text>
<text x="59.9" y="45.1" font-family="Liberation Sans" font-size="2.8" font-weight="normal" font-style="normal" fill="#333" text-anchor="middle">15°</text>
<text x="7.9" y="58.7" font-family="Liberation Sans" font-size="2.8" font-weight="normal" font-style="normal" fill="#333" text-anchor="middle">0°</text>
<text x="60.2" y="58.7" font-family="Liberation Sans" font-size="2.8" font-weight="normal" font-style="normal" fill="#333" text-anchor="middle">0°</text>
<text x="15.1" y="62.0" font-family="Liberation Sans" font-size="2.8" font-weight="normal" font-style="normal" fill="#333" text-anchor="middle">15°</text>
<text x="53" y="62.0" font-family="Liberation Sans" font-size="2.8" font-weight="normal" font-style="normal" fill="#333" text-anchor="middle">15°</text>
<text x="20.8" y="66.8" font-family="Liberation Sans" font-size="2.8" font-weight="normal" font-style="normal" fill="#333" text-anchor="middle">30°</text>
<text x="47.3" y="66.8" font-family="Liberation Sans" font-size="2.8" font-weight="normal" font-style="normal" fill="#333" text-anchor="middle">30°</text>
<text x="25.6" y="74.0" font-family="Liberation Sans" font-size="2.8" font-weight="normal" font-style="normal" fill="#333" text-anchor="middle">45°</text>
<text x="42.5" y="74.0" font-family="Liberation Sans" font-size="2.8" font-weight="normal" font-style="normal" fill="#333" text-anchor="middle">45°</text>
<text x="28" y="81.3" font-family="Liberation Sans" font-size="2.8" font-weight="normal" font-style="normal" fill="#333" text-anchor="middle">60°</text>
<text x="41.2" y="81.3" font-family="Liberation Sans" font-size="2.8" font-weight="normal" font-style="normal" fill="#333" text-anchor="middle">60°</text>
<text x="34.5" y="3.6" font-family="Liberation Sans" font-size="3" font-weight="normal" font-style="normal" fill="#777" text-anchor="middle">200</text>
<text x="34.5" y="94.6" font-family="Liberation Sans" font-size="3" font-weight="normal" font-style="normal" fill="#777" text-anchor="middle">150</text>
<line x1="20" y1="93" x2="49" y2="93" stroke="#bbb" stroke-width="0.4"/>
<text x="1.5" y="49" font-family="Liberation Sans" font-size="3" font-weight="normal" font-style="normal" fill="#777" text-anchor="start">W</text>
</g>
<text x="246" y="250.89999999999998" font-family="Liberation Sans" font-size="3.4" font-weight="normal" font-style="normal" fill="#555" text-anchor="end" textLength="45" lengthAdjust="spacingAndGlyphs">WSPÓŁCZYNNIK BMI</text>
<line x1="247" y1="251.6" x2="317" y2="251.6" stroke="#777" stroke-width="0.6"/>
<text x="281.8" y="250.89999999999998" font-family="Liberation Sans" font-size="3.6" font-weight="normal" font-style="normal" fill="#333" text-anchor="middle">0</text>
<text x="246" y="259.0" font-family="Liberation Sans" font-size="3.4" font-weight="normal" font-style="normal" fill="#555" text-anchor="end" textLength="19.5" lengthAdjust="spacingAndGlyphs">WZROST</text>
<line x1="247" y1="259.7" x2="317" y2="259.7" stroke="#777" stroke-width="0.6"/>
<text x="281.8" y="259.0" font-family="Liberation Sans" font-size="3.6" font-weight="normal" font-style="normal" fill="#333" text-anchor="middle">0</text>
<text x="246" y="267.0" font-family="Liberation Sans" font-size="3.4" font-weight="normal" font-style="normal" fill="#555" text-anchor="end" textLength="14" lengthAdjust="spacingAndGlyphs">WAGA</text>
<line x1="247" y1="267.7" x2="317" y2="267.7" stroke="#777" stroke-width="0.6"/>
<text x="281.8" y="267.0" font-family="Liberation Sans" font-size="3.6" font-weight="normal" font-style="normal" fill="#333" text-anchor="middle">0</text>
<text x="28.7" y="275.5" font-family="Liberation Sans" font-size="7" font-weight="bold" font-style="italic" fill="#111" text-anchor="start" textLength="15" lengthAdjust="spacingAndGlyphs">Opis</text>
<line x1="28" y1="277.6" x2="317" y2="277.6" stroke="#000" stroke-width="1.3"/>
<line x1="15.6" y1="440.5" x2="317" y2="440.5" stroke="#000" stroke-width="1.1"/>
<text x="167.5" y="445.4" font-family="Liberation Sans" font-size="3.5" font-weight="normal" font-style="italic" fill="#333" text-anchor="middle" textLength="163" lengthAdjust="spacingAndGlyphs">OPMI Opolu, www.opm.pl &quot;SAPC&quot; System Analizy Postawy Ciała (C)NAXXON Zasino, bxxx.pl</text>
<text x="167.3" y="452" font-family="Liberation Sans" font-size="4.6" font-weight="normal" font-style="normal" fill="#333" text-anchor="middle" textLength="26.7" lengthAdjust="spacingAndGlyphs">Strona 1 z 2</text>
</svg>
<svg class="a" style="left:531px;top:104px" width="333" height="472" viewBox="0 0 333 472">
<rect x="0.5" y="0.5" width="332" height="471" fill="#fff" stroke="#5c5c5c" stroke-width="1"/>
<text x="16.8" y="20.7" font-family="Liberation Serif" font-size="5.2" font-weight="normal" font-style="italic" fill="#333" text-anchor="start" textLength="147" lengthAdjust="spacingAndGlyphs">Karta informacyjna komputerowego badania sylwetki Adam Kowalski</text>
<text x="29.4" y="36.7" font-family="Liberation Sans" font-size="6.9" font-weight="bold" font-style="italic" fill="#111" text-anchor="start" textLength="80.6" lengthAdjust="spacingAndGlyphs">Charakterystyka sylwetki</text>
<line x1="28" y1="39.2" x2="317" y2="39.2" stroke="#000" stroke-width="1.3"/>
<text x="31" y="46.40000000000001" font-family="Liberation Sans" font-size="5.8" font-weight="bold" font-style="normal" fill="#1a1a1a" text-anchor="start" letter-spacing="0.25">PŁASZCZYZNA STRZAŁKOWA</text>
<text x="35" y="54.29999999999999" font-family="Liberation Sans" font-size="5.6" font-weight="bold" font-style="normal" fill="#1a1a1a" text-anchor="start">GŁOWA</text>
<rect x="35.5" y="56.5" width="6" height="6" fill="#fff" stroke="#000" stroke-width="1.1"/><path d="M36.7 58.6L37.4 59.4L38.8 57.6" stroke="#000" stroke-width="0.9" fill="none"/>
<text x="43.2" y="61.69999999999999" font-family="Liberation Sans" font-size="5.7" font-weight="bold" font-style="normal" fill="#000" text-anchor="start">Ustawienie prawidłowe</text>
<rect x="35.5" y="64.5" width="6" height="6" fill="#fff" stroke="#000" stroke-width="1.1"/><path d="M36.8 65.8L40.2 69.2M40.2 65.8L36.8 69.2" stroke="#000" stroke-width="1"/>
<text x="43.2" y="69.0" font-family="Liberation Sans" font-size="5.1" font-weight="normal" font-style="normal" fill="#858585" text-anchor="start">Wysunięta do przodu - nieznacznie</text>
<rect x="35.5" y="71.5" width="6" height="6" fill="#fff" stroke="#000" stroke-width="1.1"/><path d="M36.8 72.8L40.2 76.2M40.2 72.8L36.8 76.2" stroke="#000" stroke-width="1"/>
<text x="43.2" y="75.80000000000001" font-family="Liberation Sans" font-size="5.1" font-weight="normal" font-style="normal" fill="#858585" text-anchor="start">Wysunięta do przodu - silnie</text>
<text x="35" y="83.19999999999999" font-family="Liberation Sans" font-size="5.6" font-weight="bold" font-style="normal" fill="#1a1a1a" text-anchor="start">KIFOZA PIERSIOWA</text>
<rect x="35.5" y="86.5" width="6" height="6" fill="#fff" stroke="#000" stroke-width="1.1"/><path d="M36.7 88.6L37.4 89.4L38.8 87.6" stroke="#000" stroke-width="0.9" fill="none"/>
<text x="43.2" y="91.19999999999999" font-family="Liberation Sans" font-size="5.7" font-weight="bold" font-style="normal" fill="#000" text-anchor="start">Prawidłowa</text>
<rect x="35.5" y="93.5" width="6" height="6" fill="#fff" stroke="#000" stroke-width="1.1"/><path d="M36.8 94.8L40.2 98.2M40.2 94.8L36.8 98.2" stroke="#000" stroke-width="1"/>
<text x="43.2" y="97.9" font-family="Liberation Sans" font-size="5.1" font-weight="normal" font-style="normal" fill="#858585" text-anchor="start">Powiększona</text>
<rect x="35.5" y="100.5" width="6" height="6" fill="#fff" stroke="#000" stroke-width="1.1"/><path d="M36.8 101.8L40.2 105.2M40.2 101.8L36.8 105.2" stroke="#000" stroke-width="1"/>
<text x="43.2" y="105.1" font-family="Liberation Sans" font-size="5.1" font-weight="normal" font-style="normal" fill="#858585" text-anchor="start">Silnie powiększona</text>
<rect x="35.5" y="107.5" width="6" height="6" fill="#fff" stroke="#000" stroke-width="1.1"/><path d="M36.8 108.8L40.2 112.2M40.2 108.8L36.8 112.2" stroke="#000" stroke-width="1"/>
<text x="43.2" y="111.80000000000001" font-family="Liberation Sans" font-size="5.1" font-weight="normal" font-style="normal" fill="#858585" text-anchor="start">Utrwalona hiperkifoza</text>
<rect x="35.5" y="115.5" width="6" height="6" fill="#fff" stroke="#000" stroke-width="1.1"/><path d="M36.8 116.8L40.2 120.2M40.2 116.8L36.8 120.2" stroke="#000" stroke-width="1"/>
<text x="43.2" y="119.9" font-family="Liberation Sans" font-size="5.1" font-weight="normal" font-style="normal" fill="#858585" text-anchor="start">Zmniejszona, spłaszczona</text>
<rect x="35.5" y="122.5" width="6" height="6" fill="#fff" stroke="#000" stroke-width="1.1"/><path d="M36.8 123.8L40.2 127.2M40.2 123.8L36.8 127.2" stroke="#000" stroke-width="1"/>
<text x="43.2" y="126.9" font-family="Liberation Sans" font-size="5.1" font-weight="normal" font-style="normal" fill="#858585" text-anchor="start">Kręgosłup prosty, plecy płaskie</text>
<text x="35" y="133.9" font-family="Liberation Sans" font-size="5.6" font-weight="bold" font-style="normal" fill="#1a1a1a" text-anchor="start">LORDOZA LĘDŹWIOWA</text>
<rect x="35.5" y="137.5" width="6" height="6" fill="#fff" stroke="#000" stroke-width="1.1"/><path d="M36.7 139.6L37.4 140.4L38.8 138.6" stroke="#000" stroke-width="0.9" fill="none"/>
<text x="43.2" y="141.9" font-family="Liberation Sans" font-size="5.7" font-weight="bold" font-style="normal" fill="#000" text-anchor="start">Prawidłowa</text>
<rect x="35.5" y="144.5" width="6" height="6" fill="#fff" stroke="#000" stroke-width="1.1"/><path d="M36.8 145.8L40.2 149.2M40.2 145.8L36.8 149.2" stroke="#000" stroke-width="1"/>
<text x="43.2" y="148.8" font-family="Liberation Sans" font-size="5.1" font-weight="normal" font-style="normal" fill="#858585" text-anchor="start">Nieznacznie pogłębiona</text>
<rect x="35.5" y="151.5" width="6" height="6" fill="#fff" stroke="#000" stroke-width="1.1"/><path d="M36.8 152.8L40.2 156.2M40.2 152.8L36.8 156.2" stroke="#000" stroke-width="1"/>
<text x="43.2" y="155.79999999999998" font-family="Liberation Sans" font-size="5.1" font-weight="normal" font-style="normal" fill="#858585" text-anchor="start">Silnie pogłębiona</text>
<rect x="35.5" y="158.5" width="6" height="6" fill="#fff" stroke="#000" stroke-width="1.1"/><path d="M36.8 159.8L40.2 163.2M40.2 159.8L36.8 163.2" stroke="#000" stroke-width="1"/>
<text x="43.2" y="163.00000000000003" font-family="Liberation Sans" font-size="5.1" font-weight="normal" font-style="normal" fill="#858585" text-anchor="start">Utrwalona hiperlordoza</text>
<text x="35" y="171.1" font-family="Liberation Sans" font-size="5.6" font-weight="bold" font-style="normal" fill="#1a1a1a" text-anchor="start">KLATKA PIERSIOWA</text>
<rect x="35.5" y="173.5" width="6" height="6" fill="#fff" stroke="#000" stroke-width="1.1"/><path d="M36.7 175.6L37.4 176.4L38.8 174.6" stroke="#000" stroke-width="0.9" fill="none"/>
<text x="43.2" y="178.2" font-family="Liberation Sans" font-size="5.7" font-weight="bold" font-style="normal" fill="#000" text-anchor="start">Prawidłowa</text>
<rect x="35.5" y="181.5" width="6" height="6" fill="#fff" stroke="#000" stroke-width="1.1"/><path d="M36.8 182.8L40.2 186.2M40.2 182.8L36.8 186.2" stroke="#000" stroke-width="1"/>
<text x="43.2" y="186.29999999999998" font-family="Liberation Sans" font-size="5.1" font-weight="normal" font-style="normal" fill="#858585" text-anchor="start">Szewska. Piersiowa, spłaszczona</text>
<rect x="35.5" y="188.5" width="6" height="6" fill="#fff" stroke="#000" stroke-width="1.1"/><path d="M36.8 189.8L40.2 193.2M40.2 189.8L36.8 193.2" stroke="#000" stroke-width="1"/>
<text x="43.2" y="193.29999999999998" font-family="Liberation Sans" font-size="5.1" font-weight="normal" font-style="normal" fill="#858585" text-anchor="start">Szewska. Płaska, z wkładami</text>
<text x="43.2" y="199.1" font-family="Liberation Sans" font-size="5.1" font-weight="normal" font-style="normal" fill="#858585" text-anchor="start">krzywicy</text>
<rect x="35.5" y="201.5" width="6" height="6" fill="#fff" stroke="#000" stroke-width="1.1"/><path d="M36.8 202.8L40.2 206.2M40.2 202.8L36.8 206.2" stroke="#000" stroke-width="1"/>
<text x="43.2" y="206.1" font-family="Liberation Sans" font-size="5.1" font-weight="normal" font-style="normal" fill="#858585" text-anchor="start">Szewsko lejkowata</text>
<rect x="35.5" y="208.5" width="6" height="6" fill="#fff" stroke="#000" stroke-width="1.1"/><path d="M36.8 209.8L40.2 213.2M40.2 209.8L36.8 213.2" stroke="#000" stroke-width="1"/>
<text x="43.2" y="213.1" font-family="Liberation Sans" font-size="5.1" font-weight="normal" font-style="normal" fill="#858585" text-anchor="start">Piersiowa kurza, niewielkie zmiany</text>
<rect x="35.5" y="215.5" width="6" height="6" fill="#fff" stroke="#000" stroke-width="1.1"/><path d="M36.8 216.8L40.2 220.2M40.2 216.8L36.8 220.2" stroke="#000" stroke-width="1"/>
<text x="43.2" y="220.1" font-family="Liberation Sans" font-size="5.1" font-weight="normal" font-style="normal" fill="#858585" text-anchor="start">Kurza ze śladami krzywicy</text>
<rect x="35.5" y="222.5" width="6" height="6" fill="#fff" stroke="#000" stroke-width="1.1"/><path d="M36.8 223.8L40.2 227.2M40.2 223.8L36.8 227.2" stroke="#000" stroke-width="1"/>
<text x="43.2" y="227.1" font-family="Liberation Sans" font-size="5.1" font-weight="normal" font-style="normal" fill="#858585" text-anchor="start">Kurza, z dużymi zniekształceniami</text>
<text x="43.2" y="232.9" font-family="Liberation Sans" font-size="5.1" font-weight="normal" font-style="normal" fill="#858585" text-anchor="start">w postaci bruzda pokrzywiczego</text>
<text x="43.2" y="238.79999999999998" font-family="Liberation Sans" font-size="5.1" font-weight="normal" font-style="normal" fill="#858585" text-anchor="start">i bruzdy Harrisona</text>
<text x="35" y="245.99999999999997" font-family="Liberation Sans" font-size="5.6" font-weight="bold" font-style="normal" fill="#1a1a1a" text-anchor="start">BARKI</text>
<rect x="35.5" y="249.5" width="6" height="6" fill="#fff" stroke="#000" stroke-width="1.1"/><path d="M36.7 251.6L37.4 252.4L38.8 250.6" stroke="#000" stroke-width="0.9" fill="none"/>
<text x="43.2" y="254.10000000000002" font-family="Liberation Sans" font-size="5.7" font-weight="bold" font-style="normal" fill="#000" text-anchor="start">Ustawione prawidłowo</text>
<rect x="35.5" y="256.5" width="6" height="6" fill="#fff" stroke="#000" stroke-width="1.1"/><path d="M36.8 257.8L40.2 261.2M40.2 257.8L36.8 261.2" stroke="#000" stroke-width="1"/>
<text x="43.2" y="261.0" font-family="Liberation Sans" font-size="5.1" font-weight="normal" font-style="normal" fill="#858585" text-anchor="start">Lekko wysunięte do przodu</text>
<rect x="35.5" y="263.5" width="6" height="6" fill="#fff" stroke="#000" stroke-width="1.1"/><path d="M36.8 264.8L40.2 268.2M40.2 264.8L36.8 268.2" stroke="#000" stroke-width="1"/>
<text x="43.2" y="268.0" font-family="Liberation Sans" font-size="5.1" font-weight="normal" font-style="normal" fill="#858585" text-anchor="start">Silnie wysunięte do przodu</text>
<text x="35" y="275.20000000000005" font-family="Liberation Sans" font-size="5.6" font-weight="bold" font-style="normal" fill="#1a1a1a" text-anchor="start">ŁOPATKI</text>
<rect x="35.5" y="278.5" width="6" height="6" fill="#fff" stroke="#000" stroke-width="1.1"/><path d="M36.7 280.6L37.4 281.4L38.8 279.6" stroke="#000" stroke-width="0.9" fill="none"/>
<text x="43.2" y="283.3" font-family="Liberation Sans" font-size="5.7" font-weight="bold" font-style="normal" fill="#000" text-anchor="start">Ustawione prawidłowo</text>
<rect x="35.5" y="285.5" width="6" height="6" fill="#fff" stroke="#000" stroke-width="1.1"/><path d="M36.8 286.8L40.2 290.2M40.2 286.8L36.8 290.2" stroke="#000" stroke-width="1"/>
<text x="43.2" y="290.2" font-family="Liberation Sans" font-size="5.1" font-weight="normal" font-style="normal" fill="#858585" text-anchor="start">Nieznacznie odstające</text>
<rect x="35.5" y="292.5" width="6" height="6" fill="#fff" stroke="#000" stroke-width="1.1"/><path d="M36.8 293.8L40.2 297.2M40.2 293.8L36.8 297.2" stroke="#000" stroke-width="1"/>
<text x="43.2" y="297.2" font-family="Liberation Sans" font-size="5.1" font-weight="normal" font-style="normal" fill="#858585" text-anchor="start">Wyraźnie odstające</text>
<text x="134" y="46.00000000000001" font-family="Liberation Sans" font-size="5.6" font-weight="bold" font-style="normal" fill="#1a1a1a" text-anchor="start">BRZUCH</text>
<rect x="134.5" y="49.5" width="6" height="6" fill="#fff" stroke="#000" stroke-width="1.1"/><path d="M135.7 51.6L136.4 52.4L137.8 50.6" stroke="#000" stroke-width="0.9" fill="none"/>
<text x="142.2" y="54.19999999999999" font-family="Liberation Sans" font-size="5.7" font-weight="bold" font-style="normal" fill="#000" text-anchor="start">Prawidłowy płaski</text>
<rect x="134.5" y="56.5" width="6" height="6" fill="#fff" stroke="#000" stroke-width="1.1"/><path d="M135.8 57.8L139.2 61.2M139.2 57.8L135.8 61.2" stroke="#000" stroke-width="1"/>
<text x="142.2" y="60.9" font-family="Liberation Sans" font-size="5.1" font-weight="normal" font-style="normal" fill="#858585" text-anchor="start">Nieznacznie uwypuklony</text>
<rect x="134.5" y="63.5" width="6" height="6" fill="#fff" stroke="#000" stroke-width="1.1"/><path d="M135.8 64.8L139.2 68.2M139.2 64.8L135.8 68.2" stroke="#000" stroke-width="1"/>
<text x="142.2" y="67.9" font-family="Liberation Sans" font-size="5.1" font-weight="normal" font-style="normal" fill="#858585" text-anchor="start">Uwypuklony poza linię klatki</text>
<rect x="134.5" y="69.5" width="6" height="6" fill="#fff" stroke="#000" stroke-width="1.1"/><path d="M135.8 70.8L139.2 74.2M139.2 70.8L135.8 74.2" stroke="#000" stroke-width="1"/>
<text x="142.2" y="74.6" font-family="Liberation Sans" font-size="5.1" font-weight="normal" font-style="normal" fill="#858585" text-anchor="start">Obwisły</text>
<text x="134" y="82.69999999999999" font-family="Liberation Sans" font-size="5.6" font-weight="bold" font-style="normal" fill="#1a1a1a" text-anchor="start">MIEDNICA</text>
<rect x="134.5" y="85.5" width="6" height="6" fill="#fff" stroke="#000" stroke-width="1.1"/><path d="M135.7 87.6L136.4 88.4L137.8 86.6" stroke="#000" stroke-width="0.9" fill="none"/>
<text x="142.2" y="90.30000000000001" font-family="Liberation Sans" font-size="5.7" font-weight="bold" font-style="normal" fill="#000" text-anchor="start">Ustawiona prawidłowo</text>
<rect x="134.5" y="92.5" width="6" height="6" fill="#fff" stroke="#000" stroke-width="1.1"/><path d="M135.8 93.8L139.2 97.2M139.2 93.8L135.8 97.2" stroke="#000" stroke-width="1"/>
<text x="142.2" y="97.20000000000002" font-family="Liberation Sans" font-size="5.1" font-weight="normal" font-style="normal" fill="#858585" text-anchor="start">Nieznacznie pochylona do przodu</text>
<rect x="134.5" y="99.5" width="6" height="6" fill="#fff" stroke="#000" stroke-width="1.1"/><path d="M135.8 100.8L139.2 104.2M139.2 100.8L135.8 104.2" stroke="#000" stroke-width="1"/>
<text x="142.2" y="104.4" font-family="Liberation Sans" font-size="5.1" font-weight="normal" font-style="normal" fill="#858585" text-anchor="start">Wyraźnie pochylona do przodu</text>
<text x="134" y="111.79999999999998" font-family="Liberation Sans" font-size="5.6" font-weight="bold" font-style="normal" fill="#1a1a1a" text-anchor="start">KOLANA</text>
<rect x="134.5" y="113.5" width="6" height="6" fill="#fff" stroke="#000" stroke-width="1.1"/><path d="M135.7 115.6L136.4 116.4L137.8 114.6" stroke="#000" stroke-width="0.9" fill="none"/>
<text x="142.2" y="118.69999999999999" font-family="Liberation Sans" font-size="5.7" font-weight="bold" font-style="normal" fill="#000" text-anchor="start">Ustawione prawidłowo</text>
<rect x="134.5" y="121.5" width="6" height="6" fill="#fff" stroke="#000" stroke-width="1.1"/><path d="M135.8 122.8L139.2 126.2M139.2 122.8L135.8 126.2" stroke="#000" stroke-width="1"/>
<text x="142.2" y="125.80000000000001" font-family="Liberation Sans" font-size="5.1" font-weight="normal" font-style="normal" fill="#858585" text-anchor="start">Nieznaczny przeprost kolan</text>
<rect x="134.5" y="128.5" width="6" height="6" fill="#fff" stroke="#000" stroke-width="1.1"/><path d="M135.8 129.8L139.2 133.2M139.2 129.8L135.8 133.2" stroke="#000" stroke-width="1"/>
<text x="142.2" y="133.0" font-family="Liberation Sans" font-size="5.1" font-weight="normal" font-style="normal" fill="#858585" text-anchor="start">Wyraźny przeprost kolan</text>
<text x="134" y="141.1" font-family="Liberation Sans" font-size="5.6" font-weight="bold" font-style="normal" fill="#1a1a1a" text-anchor="start">STOPY</text>
<rect x="134.5" y="144.5" width="6" height="6" fill="#fff" stroke="#000" stroke-width="1.1"/><path d="M135.7 146.6L136.4 147.4L137.8 145.6" stroke="#000" stroke-width="0.9" fill="none"/>
<text x="142.2" y="148.9" font-family="Liberation Sans" font-size="5.7" font-weight="bold" font-style="normal" fill="#000" text-anchor="start">Prawidłowe</text>
<rect x="134.5" y="151.5" width="6" height="6" fill="#fff" stroke="#000" stroke-width="1.1"/><path d="M135.8 152.8L139.2 156.2M139.2 152.8L135.8 156.2" stroke="#000" stroke-width="1"/>
<text x="142.2" y="155.79999999999998" font-family="Liberation Sans" font-size="5.1" font-weight="normal" font-style="normal" fill="#858585" text-anchor="start">Nieznacznie płaskie</text>
<rect x="134.5" y="158.5" width="6" height="6" fill="#fff" stroke="#000" stroke-width="1.1"/><path d="M135.8 159.8L139.2 163.2M139.2 159.8L135.8 163.2" stroke="#000" stroke-width="1"/>
<text x="142.2" y="163.00000000000003" font-family="Liberation Sans" font-size="5.1" font-weight="normal" font-style="normal" fill="#858585" text-anchor="start">Wyraźnie płaskie</text>
<rect x="134.5" y="165.5" width="6" height="6" fill="#fff" stroke="#000" stroke-width="1.1"/><path d="M135.8 166.8L139.2 170.2M139.2 166.8L135.8 170.2" stroke="#000" stroke-width="1"/>
<text x="142.2" y="170.20000000000002" font-family="Liberation Sans" font-size="5.1" font-weight="normal" font-style="normal" fill="#858585" text-anchor="start">Nieznacznie wydrążone</text>
<rect x="134.5" y="172.5" width="6" height="6" fill="#fff" stroke="#000" stroke-width="1.1"/><path d="M135.8 173.8L139.2 177.2M139.2 173.8L135.8 177.2" stroke="#000" stroke-width="1"/>
<text x="142.2" y="177.20000000000002" font-family="Liberation Sans" font-size="5.1" font-weight="normal" font-style="normal" fill="#858585" text-anchor="start">Wyraźnie wydrążone</text>
<text x="131.5" y="184.9" font-family="Liberation Sans" font-size="5.8" font-weight="bold" font-style="normal" fill="#1a1a1a" text-anchor="start" letter-spacing="0.25">PŁASZCZYZNA CZOŁOWA</text>
<text x="134" y="193.1" font-family="Liberation Sans" font-size="5.6" font-weight="bold" font-style="normal" fill="#1a1a1a" text-anchor="start">GŁOWA</text>
<rect x="134.5" y="196.5" width="6" height="6" fill="#fff" stroke="#000" stroke-width="1.1"/><path d="M135.7 198.6L136.4 199.4L137.8 197.6" stroke="#000" stroke-width="0.9" fill="none"/>
<text x="142.2" y="201.2" font-family="Liberation Sans" font-size="5.7" font-weight="bold" font-style="normal" fill="#000" text-anchor="start">Ustawienie prawidłowe</text>
<rect x="134.5" y="203.5" width="6" height="6" fill="#fff" stroke="#000" stroke-width="1.1"/><path d="M135.8 204.8L139.2 208.2M139.2 204.8L135.8 208.2" stroke="#000" stroke-width="1"/>
<text x="142.2" y="208.1" font-family="Liberation Sans" font-size="5.1" font-weight="normal" font-style="normal" fill="#858585" text-anchor="start">Nachylona w lewo</text>
<rect x="134.5" y="210.5" width="6" height="6" fill="#fff" stroke="#000" stroke-width="1.1"/><path d="M135.8 211.8L139.2 215.2M139.2 211.8L135.8 215.2" stroke="#000" stroke-width="1"/>
<text x="142.2" y="215.1" font-family="Liberation Sans" font-size="5.1" font-weight="normal" font-style="normal" fill="#858585" text-anchor="start">Nachylona w prawo</text>
<text x="134" y="222.99999999999997" font-family="Liberation Sans" font-size="5.6" font-weight="bold" font-style="normal" fill="#1a1a1a" text-anchor="start">KRĘGOSŁUP</text>
<rect x="134.5" y="225.5" width="6" height="6" fill="#fff" stroke="#000" stroke-width="1.1"/><path d="M135.7 227.6L136.4 228.4L137.8 226.6" stroke="#000" stroke-width="0.9" fill="none"/>
<text x="142.2" y="230.39999999999998" font-family="Liberation Sans" font-size="5.7" font-weight="bold" font-style="normal" fill="#000" text-anchor="start">W normie</text>
<rect x="134.5" y="233.5" width="6" height="6" fill="#fff" stroke="#000" stroke-width="1.1"/><path d="M135.8 234.8L139.2 238.2M139.2 234.8L135.8 238.2" stroke="#000" stroke-width="1"/>
<text x="142.2" y="237.9" font-family="Liberation Sans" font-size="5.1" font-weight="normal" font-style="normal" fill="#858585" text-anchor="start">Odchylony nieznacznie w lewo</text>
<rect x="134.5" y="240.5" width="6" height="6" fill="#fff" stroke="#000" stroke-width="1.1"/><path d="M135.8 241.8L139.2 245.2M139.2 241.8L135.8 245.2" stroke="#000" stroke-width="1"/>
<text x="142.2" y="245.00000000000003" font-family="Liberation Sans" font-size="5.1" font-weight="normal" font-style="normal" fill="#858585" text-anchor="start">Wyraźnie odchylony w lewo</text>
<rect x="134.5" y="247.5" width="6" height="6" fill="#fff" stroke="#000" stroke-width="1.1"/><path d="M135.8 248.8L139.2 252.2M139.2 248.8L135.8 252.2" stroke="#000" stroke-width="1"/>
<text x="142.2" y="252.00000000000003" font-family="Liberation Sans" font-size="5.1" font-weight="normal" font-style="normal" fill="#858585" text-anchor="start">Nieznacznie odchylony w prawo</text>
<rect x="134.5" y="254.5" width="6" height="6" fill="#fff" stroke="#000" stroke-width="1.1"/><path d="M135.8 255.8L139.2 259.2M139.2 255.8L135.8 259.2" stroke="#000" stroke-width="1"/>
<text x="142.2" y="259.0" font-family="Liberation Sans" font-size="5.1" font-weight="normal" font-style="normal" fill="#858585" text-anchor="start">Wyraźnie odchylony w prawo</text>
<text x="134" y="266.90000000000003" font-family="Liberation Sans" font-size="5.6" font-weight="bold" font-style="normal" fill="#1a1a1a" text-anchor="start">GARB ŻEBROWY</text>
<rect x="134.5" y="269.5" width="6" height="6" fill="#fff" stroke="#000" stroke-width="1.1"/><path d="M135.7 271.6L136.4 272.4L137.8 270.6" stroke="#000" stroke-width="0.9" fill="none"/>
<text x="142.2" y="274.3" font-family="Liberation Sans" font-size="5.7" font-weight="bold" font-style="normal" fill="#000" text-anchor="start">W normie</text>
<rect x="134.5" y="276.5" width="6" height="6" fill="#fff" stroke="#000" stroke-width="1.1"/><path d="M135.8 277.8L139.2 281.2M139.2 277.8L135.8 281.2" stroke="#000" stroke-width="1"/>
<text x="142.2" y="281.59999999999997" font-family="Liberation Sans" font-size="5.1" font-weight="normal" font-style="normal" fill="#858585" text-anchor="start">Odchylony nieznacznie w lewo</text>
<rect x="134.5" y="283.5" width="6" height="6" fill="#fff" stroke="#000" stroke-width="1.1"/><path d="M135.8 284.8L139.2 288.2M139.2 284.8L135.8 288.2" stroke="#000" stroke-width="1"/>
<text x="142.2" y="288.59999999999997" font-family="Liberation Sans" font-size="5.1" font-weight="normal" font-style="normal" fill="#858585" text-anchor="start">Wyraźnie odchylony w lewo</text>
<rect x="134.5" y="291.5" width="6" height="6" fill="#fff" stroke="#000" stroke-width="1.1"/><path d="M135.8 292.8L139.2 296.2M139.2 292.8L135.8 296.2" stroke="#000" stroke-width="1"/>
<text x="142.2" y="296.29999999999995" font-family="Liberation Sans" font-size="5.1" font-weight="normal" font-style="normal" fill="#858585" text-anchor="start">Nieznacznie odchylony w prawo</text>
<rect x="134.5" y="298.5" width="6" height="6" fill="#fff" stroke="#000" stroke-width="1.1"/><path d="M135.8 299.8L139.2 303.2M139.2 299.8L135.8 303.2" stroke="#000" stroke-width="1"/>
<text x="142.2" y="303.29999999999995" font-family="Liberation Sans" font-size="5.1" font-weight="normal" font-style="normal" fill="#858585" text-anchor="start">Wyraźnie odchylony w prawo</text>
<text x="226.5" y="46.40000000000001" font-family="Liberation Sans" font-size="5.6" font-weight="bold" font-style="normal" fill="#1a1a1a" text-anchor="start">WAŁ MIĘŚNIOWY</text>
<rect x="226.5" y="49.5" width="6" height="6" fill="#fff" stroke="#000" stroke-width="1.1"/><path d="M227.7 51.6L228.4 52.4L229.8 50.6" stroke="#000" stroke-width="0.9" fill="none"/>
<text x="234.7" y="54.19999999999999" font-family="Liberation Sans" font-size="5.7" font-weight="bold" font-style="normal" fill="#000" text-anchor="start">Prawidłowo - brak</text>
<rect x="226.5" y="56.5" width="6" height="6" fill="#fff" stroke="#000" stroke-width="1.1"/><path d="M227.8 57.8L231.2 61.2M231.2 57.8L227.8 61.2" stroke="#000" stroke-width="1"/>
<text x="234.7" y="61.59999999999999" font-family="Liberation Sans" font-size="5.1" font-weight="normal" font-style="normal" fill="#858585" text-anchor="start">Nieznaczny po stronie lewej</text>
<rect x="226.5" y="64.5" width="6" height="6" fill="#fff" stroke="#000" stroke-width="1.1"/><path d="M227.8 65.8L231.2 69.2M231.2 65.8L227.8 69.2" stroke="#000" stroke-width="1"/>
<text x="234.7" y="68.80000000000001" font-family="Liberation Sans" font-size="5.1" font-weight="normal" font-style="normal" fill="#858585" text-anchor="start">Wyraźny po stronie lewej</text>
<rect x="226.5" y="71.5" width="6" height="6" fill="#fff" stroke="#000" stroke-width="1.1"/><path d="M227.8 72.8L231.2 76.2M231.2 72.8L227.8 76.2" stroke="#000" stroke-width="1"/>
<text x="234.7" y="76.20000000000002" font-family="Liberation Sans" font-size="5.1" font-weight="normal" font-style="normal" fill="#858585" text-anchor="start">Nieznaczny po stronie prawej</text>
<rect x="226.5" y="78.5" width="6" height="6" fill="#fff" stroke="#000" stroke-width="1.1"/><path d="M227.8 79.8L231.2 83.2M231.2 79.8L227.8 83.2" stroke="#000" stroke-width="1"/>
<text x="234.7" y="83.4" font-family="Liberation Sans" font-size="5.1" font-weight="normal" font-style="normal" fill="#858585" text-anchor="start">Wyraźny po stronie prawej</text>
<text x="226.5" y="91.1" font-family="Liberation Sans" font-size="5.6" font-weight="bold" font-style="normal" fill="#1a1a1a" text-anchor="start">TALIA</text>
<rect x="226.5" y="93.5" width="6" height="6" fill="#fff" stroke="#000" stroke-width="1.1"/><path d="M227.7 95.6L228.4 96.4L229.8 94.6" stroke="#000" stroke-width="0.9" fill="none"/>
<text x="234.7" y="98.19999999999999" font-family="Liberation Sans" font-size="5.7" font-weight="bold" font-style="normal" fill="#000" text-anchor="start">Prawidłowa</text>
<rect x="226.5" y="100.5" width="6" height="6" fill="#fff" stroke="#000" stroke-width="1.1"/><path d="M227.8 101.8L231.2 105.2M231.2 101.8L227.8 105.2" stroke="#000" stroke-width="1"/>
<text x="234.7" y="105.1" font-family="Liberation Sans" font-size="5.1" font-weight="normal" font-style="normal" fill="#858585" text-anchor="start">Nieznacznie asymetryczna</text>
<rect x="226.5" y="107.5" width="6" height="6" fill="#fff" stroke="#000" stroke-width="1.1"/><path d="M227.8 108.8L231.2 112.2M231.2 108.8L227.8 112.2" stroke="#000" stroke-width="1"/>
<text x="234.7" y="112.30000000000001" font-family="Liberation Sans" font-size="5.1" font-weight="normal" font-style="normal" fill="#858585" text-anchor="start">Wyraźnie asymetryczna</text>
<text x="226.5" y="119.9" font-family="Liberation Sans" font-size="5.6" font-weight="bold" font-style="normal" fill="#1a1a1a" text-anchor="start">BARKI</text>
<rect x="226.5" y="123.5" width="6" height="6" fill="#fff" stroke="#000" stroke-width="1.1"/><path d="M227.7 125.6L228.4 126.4L229.8 124.6" stroke="#000" stroke-width="0.9" fill="none"/>
<text x="234.7" y="128.2" font-family="Liberation Sans" font-size="5.7" font-weight="bold" font-style="normal" fill="#000" text-anchor="start">Ustawione prawidłowo</text>
<rect x="226.5" y="130.5" width="6" height="6" fill="#fff" stroke="#000" stroke-width="1.1"/><path d="M227.8 131.8L231.2 135.2M231.2 131.8L227.8 135.2" stroke="#000" stroke-width="1"/>
<text x="234.7" y="135.3" font-family="Liberation Sans" font-size="5.1" font-weight="normal" font-style="normal" fill="#858585" text-anchor="start">Nieznacznie asymetryczne</text>
<rect x="226.5" y="137.5" width="6" height="6" fill="#fff" stroke="#000" stroke-width="1.1"/><path d="M227.8 138.8L231.2 142.2M231.2 138.8L227.8 142.2" stroke="#000" stroke-width="1"/>
<text x="234.7" y="142.0" font-family="Liberation Sans" font-size="5.1" font-weight="normal" font-style="normal" fill="#858585" text-anchor="start">Wyraźnie asymetryczne</text>
<text x="226.5" y="149.0" font-family="Liberation Sans" font-size="5.6" font-weight="bold" font-style="normal" fill="#1a1a1a" text-anchor="start">ŁOPATKI</text>
<rect x="226.5" y="152.5" width="6" height="6" fill="#fff" stroke="#000" stroke-width="1.1"/><path d="M227.7 154.6L228.4 155.4L229.8 153.6" stroke="#000" stroke-width="0.9" fill="none"/>
<text x="234.7" y="157.0" font-family="Liberation Sans" font-size="5.7" font-weight="bold" font-style="normal" fill="#000" text-anchor="start">Ustawione prawidłowo</text>
<rect x="226.5" y="159.5" width="6" height="6" fill="#fff" stroke="#000" stroke-width="1.1"/><path d="M227.8 160.8L231.2 164.2M231.2 160.8L227.8 164.2" stroke="#000" stroke-width="1"/>
<text x="234.7" y="164.1" font-family="Liberation Sans" font-size="5.1" font-weight="normal" font-style="normal" fill="#858585" text-anchor="start">Nieznacznie asymetryczne</text>
<rect x="226.5" y="166.5" width="6" height="6" fill="#fff" stroke="#000" stroke-width="1.1"/><path d="M227.8 167.8L231.2 171.2M231.2 167.8L227.8 171.2" stroke="#000" stroke-width="1"/>
<text x="234.7" y="171.00000000000003" font-family="Liberation Sans" font-size="5.1" font-weight="normal" font-style="normal" fill="#858585" text-anchor="start">Wyraźnie asymetryczne</text>
<text x="226.5" y="178.6" font-family="Liberation Sans" font-size="5.6" font-weight="bold" font-style="normal" fill="#1a1a1a" text-anchor="start">ROTACJA MIEDNICY</text>
<rect x="226.5" y="181.5" width="6" height="6" fill="#fff" stroke="#000" stroke-width="1.1"/><path d="M227.7 183.6L228.4 184.4L229.8 182.6" stroke="#000" stroke-width="0.9" fill="none"/>
<text x="234.7" y="186.2" font-family="Liberation Sans" font-size="5.7" font-weight="bold" font-style="normal" fill="#000" text-anchor="start">Ustawiona prawidłowo</text>
<rect x="226.5" y="188.5" width="6" height="6" fill="#fff" stroke="#000" stroke-width="1.1"/><path d="M227.8 189.8L231.2 193.2M231.2 189.8L227.8 193.2" stroke="#000" stroke-width="1"/>
<text x="234.7" y="193.50000000000003" font-family="Liberation Sans" font-size="5.1" font-weight="normal" font-style="normal" fill="#858585" text-anchor="start">Nieznacznie asymetryczna</text>
<rect x="226.5" y="196.5" width="6" height="6" fill="#fff" stroke="#000" stroke-width="1.1"/><path d="M227.8 197.8L231.2 201.2M231.2 197.8L227.8 201.2" stroke="#000" stroke-width="1"/>
<text x="234.7" y="201.00000000000003" font-family="Liberation Sans" font-size="5.1" font-weight="normal" font-style="normal" fill="#858585" text-anchor="start">Wyraźnie asymetryczna</text>
<text x="226.5" y="207.9" font-family="Liberation Sans" font-size="5.6" font-weight="bold" font-style="normal" fill="#1a1a1a" text-anchor="start">KOLANA</text>
<rect x="226.5" y="211.5" width="6" height="6" fill="#fff" stroke="#000" stroke-width="1.1"/><path d="M227.7 213.6L228.4 214.4L229.8 212.6" stroke="#000" stroke-width="0.9" fill="none"/>
<text x="234.7" y="216.2" font-family="Liberation Sans" font-size="5.7" font-weight="bold" font-style="normal" fill="#000" text-anchor="start">Prawidłowe</text>
<rect x="226.5" y="218.5" width="6" height="6" fill="#fff" stroke="#000" stroke-width="1.1"/><path d="M227.8 219.8L231.2 223.2M231.2 219.8L227.8 223.2" stroke="#000" stroke-width="1"/>
<text x="234.7" y="223.4" font-family="Liberation Sans" font-size="5.1" font-weight="normal" font-style="normal" fill="#858585" text-anchor="start">Szpotawe, nieprzyleg.(&gt;1cm)</text>
<rect x="226.5" y="225.5" width="6" height="6" fill="#fff" stroke="#000" stroke-width="1.1"/><path d="M227.8 226.8L231.2 230.2M231.2 226.8L227.8 230.2" stroke="#000" stroke-width="1"/>
<text x="234.7" y="230.1" font-family="Liberation Sans" font-size="5.1" font-weight="normal" font-style="normal" fill="#858585" text-anchor="start">Szpotawe, nieprzyleg.(&gt;3cm)</text>
<rect x="226.5" y="233.5" width="6" height="6" fill="#fff" stroke="#000" stroke-width="1.1"/><path d="M227.8 234.8L231.2 238.2M231.2 234.8L227.8 238.2" stroke="#000" stroke-width="1"/>
<text x="234.7" y="238.1" font-family="Liberation Sans" font-size="5.1" font-weight="normal" font-style="normal" fill="#858585" text-anchor="start">Koślawe nieznacznie</text>
<rect x="226.5" y="240.5" width="6" height="6" fill="#fff" stroke="#000" stroke-width="1.1"/><path d="M227.8 241.8L231.2 245.2M231.2 241.8L227.8 245.2" stroke="#000" stroke-width="1"/>
<text x="234.7" y="245.00000000000003" font-family="Liberation Sans" font-size="5.1" font-weight="normal" font-style="normal" fill="#858585" text-anchor="start">Koślawe znacząco</text>
<text x="226.5" y="251.9" font-family="Liberation Sans" font-size="5.6" font-weight="bold" font-style="normal" fill="#1a1a1a" text-anchor="start">PIĘTY</text>
<rect x="226.5" y="254.5" width="6" height="6" fill="#fff" stroke="#000" stroke-width="1.1"/><path d="M227.7 256.6L228.4 257.4L229.8 255.6" stroke="#000" stroke-width="0.9" fill="none"/>
<text x="234.7" y="259.8" font-family="Liberation Sans" font-size="5.7" font-weight="bold" font-style="normal" fill="#000" text-anchor="start">Prawidłowe</text>
<rect x="226.5" y="262.5" width="6" height="6" fill="#fff" stroke="#000" stroke-width="1.1"/><path d="M227.8 263.8L231.2 267.2M231.2 263.8L227.8 267.2" stroke="#000" stroke-width="1"/>
<text x="234.7" y="267.0" font-family="Liberation Sans" font-size="5.1" font-weight="normal" font-style="normal" fill="#858585" text-anchor="start">Koślawe</text>
<rect x="226.5" y="269.5" width="6" height="6" fill="#fff" stroke="#000" stroke-width="1.1"/><path d="M227.8 270.8L231.2 274.2M231.2 270.8L227.8 274.2" stroke="#000" stroke-width="1"/>
<text x="234.7" y="274.29999999999995" font-family="Liberation Sans" font-size="5.1" font-weight="normal" font-style="normal" fill="#858585" text-anchor="start">Szpotawe</text>
<text x="29.4" y="314.1" font-family="Liberation Sans" font-size="6.9" font-weight="bold" font-style="italic" fill="#111" text-anchor="start" textLength="59.4" lengthAdjust="spacingAndGlyphs">Wnioski, zalecenia</text>
<line x1="28" y1="316.6" x2="317" y2="316.6" stroke="#000" stroke-width="1.3"/>
<text x="17" y="328" font-family="Liberation Sans" font-size="3" font-weight="normal" font-style="normal" fill="#555" text-anchor="start" textLength="32" lengthAdjust="spacingAndGlyphs">brak uwag lekarza</text>
<line x1="16" y1="440.8" x2="317" y2="440.8" stroke="#000" stroke-width="1.1"/>
<text x="166.5" y="445.4" font-family="Liberation Sans" font-size="3.5" font-weight="normal" font-style="italic" fill="#333" text-anchor="middle" textLength="164" lengthAdjust="spacingAndGlyphs">OPMI Opolu, www.opm.pl &quot;SAPC&quot; System Analizy Postawy Ciała (C)NAXXON Zasino, bxxx.pl</text>
<text x="167.3" y="452.2" font-family="Liberation Sans" font-size="4.6" font-weight="normal" font-style="normal" fill="#333" text-anchor="middle" textLength="28" lengthAdjust="spacingAndGlyphs">Strona 2 z 2</text>
</svg>
<div class="a" style="left:20px;top:102px;width:83px;height:116px;border:2px solid #f7c236"></div>
<svg class="a" style="left:22px;top:104px" width="79" height="112" viewBox="0 0 333 472" preserveAspectRatio="none">
<rect x="2" y="2" width="329" height="468" fill="#fff" stroke="#5c5c5c" stroke-width="4.3" shape-rendering="crispEdges"/>
<rect x="283.1" y="20.0" width="33.5" height="3.0" fill="#000" opacity="0.6"/>
<rect x="20.7" y="27.4" width="94.0" height="4.6" fill="#000" opacity="0.6"/>
<rect x="20.7" y="37.0" width="86.0" height="4.6" fill="#000" opacity="0.6"/>
<rect x="22.5" y="53.3" width="4.5" height="3.7" fill="#333" opacity="0.6"/>
<rect x="20.7" y="62.9" width="12.5" height="4.1" fill="#111" opacity="0.6"/>
<rect x="25.3" y="89.3" width="81.0" height="5.6" fill="#111" opacity="0.85"/>
<rect x="25.3" y="98.4" width="68.0" height="5.6" fill="#111" opacity="0.85"/>
<rect x="25.3" y="107.4" width="71.0" height="5.6" fill="#111" opacity="0.85"/>
<rect x="150.5" y="82.5" width="167.0" height="59.80000000000001" fill="none" stroke="#000" stroke-width="4.3"/>
<line x1="186.4" y1="82.5" x2="186.4" y2="142.3" stroke="#000" stroke-width="4.3" shape-rendering="crispEdges"/>
<line x1="150.5" y1="91.2" x2="317.5" y2="91.2" stroke="#000" stroke-width="4.3" shape-rendering="crispEdges"/>
<line x1="150.5" y1="100.6" x2="317.5" y2="100.6" stroke="#000" stroke-width="4.3" shape-rendering="crispEdges"/>
<line x1="150.5" y1="110.1" x2="317.5" y2="110.1" stroke="#000" stroke-width="4.3" shape-rendering="crispEdges"/>
<line x1="150.5" y1="119.3" x2="317.5" y2="119.3" stroke="#000" stroke-width="4.3" shape-rendering="crispEdges"/>
<rect x="156.5" y="86.4" width="28.0" height="2.0" fill="#222" opacity="0.85"/>
<rect x="166.5" y="95.7" width="18.0" height="2.0" fill="#222" opacity="0.85"/>
<rect x="176.5" y="105.2" width="8.0" height="2.0" fill="#222" opacity="0.85"/>
<rect x="173.5" y="114.5" width="11.0" height="2.0" fill="#222" opacity="0.85"/>
<rect x="173.5" y="130.5" width="11.0" height="2.0" fill="#222" opacity="0.85"/>
<rect x="230.5" y="86.0" width="43.0" height="3.3" fill="#222" opacity="0.6"/>
<rect x="240.0" y="95.5" width="24.0" height="3.3" fill="#111" opacity="0.85"/>
<rect x="244.0" y="104.9" width="16.0" height="3.3" fill="#111" opacity="0.85"/>
<g transform="translate(16,146)">
<rect x="0.5" y="0.5" width="74.5" height="95" fill="#fff" stroke="#6a6a6a" stroke-width="4.3" shape-rendering="crispEdges"/>
<rect x="4.5" y="4.5" width="60.5" height="86" fill="none" stroke="#ddd" stroke-width="3"/>
<circle cx="34.6" cy="47.5" r="17" fill="none" stroke="#bbb" stroke-width="4"/>
<rect x="28.4" y="14.2" width="4" height="3" fill="#bbb"/>
<rect x="35.7" y="14.2" width="4" height="3" fill="#bbb"/>
<rect x="26" y="78.7" width="4" height="3" fill="#bbb"/>
<rect x="39.2" y="78.7" width="4" height="3" fill="#bbb"/>
</g>
<g transform="translate(91,146)">
<rect x="0.5" y="0.5" width="74.5" height="95" fill="#fff" stroke="#6a6a6a" stroke-width="4.3" shape-rendering="crispEdges"/>
<rect x="4.5" y="4.5" width="60.5" height="86" fill="none" stroke="#ddd" stroke-width="3"/>
<circle cx="34.6" cy="47.5" r="17" fill="none" stroke="#bbb" stroke-width="4"/>
<rect x="28.4" y="14.2" width="4" height="3" fill="#bbb"/>
<rect x="35.7" y="14.2" width="4" height="3" fill="#bbb"/>
<rect x="26" y="78.7" width="4" height="3" fill="#bbb"/>
<rect x="39.2" y="78.7" width="4" height="3" fill="#bbb"/>
</g>
<g transform="translate(167,146)">
<rect x="0.5" y="0.5" width="74.5" height="95" fill="#fff" stroke="#6a6a6a" stroke-width="4.3" shape-rendering="crispEdges"/>
<rect x="4.5" y="4.5" width="60.5" height="86" fill="none" stroke="#ddd" stroke-width="3"/>
<circle cx="34.6" cy="47.5" r="17" fill="none" stroke="#bbb" stroke-width="4"/>
<rect x="28.4" y="14.2" width="4" height="3" fill="#bbb"/>
<rect x="35.7" y="14.2" width="4" height="3" fill="#bbb"/>
<rect x="26" y="78.7" width="4" height="3" fill="#bbb"/>
<rect x="39.2" y="78.7" width="4" height="3" fill="#bbb"/>
</g>
<g transform="translate(243,146)">
<rect x="0.5" y="0.5" width="74.5" height="95" fill="#fff" stroke="#6a6a6a" stroke-width="4.3" shape-rendering="crispEdges"/>
<rect x="4.5" y="4.5" width="60.5" height="86" fill="none" stroke="#ddd" stroke-width="3"/>
<circle cx="34.6" cy="47.5" r="17" fill="none" stroke="#bbb" stroke-width="4"/>
<rect x="28.4" y="14.2" width="4" height="3" fill="#bbb"/>
<rect x="35.7" y="14.2" width="4" height="3" fill="#bbb"/>
<rect x="26" y="78.7" width="4" height="3" fill="#bbb"/>
<rect x="39.2" y="78.7" width="4" height="3" fill="#bbb"/>
</g>
<rect x="201.0" y="248.8" width="45.0" height="2.1" fill="#555" opacity="0.6"/>
<line x1="247" y1="251.6" x2="317" y2="251.6" stroke="#999" stroke-width="3"/>
<rect x="280.8" y="248.7" width="2.0" height="2.2" fill="#333" opacity="0.6"/>
<rect x="226.5" y="256.9" width="19.5" height="2.1" fill="#555" opacity="0.6"/>
<line x1="247" y1="259.7" x2="317" y2="259.7" stroke="#999" stroke-width="3"/>
<rect x="280.8" y="256.8" width="2.0" height="2.2" fill="#333" opacity="0.6"/>
<rect x="232.0" y="264.9" width="14.0" height="2.1" fill="#555" opacity="0.6"/>
<line x1="247" y1="267.7" x2="317" y2="267.7" stroke="#999" stroke-width="3"/>
<rect x="280.8" y="264.8" width="2.0" height="2.2" fill="#333" opacity="0.6"/>
<rect x="28.7" y="271.2" width="15.0" height="4.3" fill="#111" opacity="0.85"/>
<line x1="28" y1="277.6" x2="317" y2="277.6" stroke="#000" stroke-width="4.3" shape-rendering="crispEdges"/>
<line x1="15.6" y1="440.5" x2="317" y2="440.5" stroke="#000" stroke-width="4.3" shape-rendering="crispEdges"/>
<rect x="86.0" y="443.2" width="163.0" height="2.2" fill="#333" opacity="0.6"/>
<rect x="154.0" y="449.1" width="26.7" height="2.9" fill="#333" opacity="0.6"/></svg>
<svg class="a" style="left:22px;top:105px" width="14" height="14" viewBox="0 0 14 14"><rect width="14" height="14" fill="#8ba8c9"/><path d="M5.2 4.2L7.3 2.5V11" stroke="#fff" stroke-width="1.1" fill="none"/></svg>
<svg class="a" style="left:22px;top:226px" width="79" height="112" viewBox="0 0 333 472" preserveAspectRatio="none">
<rect x="2" y="2" width="329" height="468" fill="#fff" stroke="#5c5c5c" stroke-width="4.3" shape-rendering="crispEdges"/>
<rect x="16.8" y="17.5" width="147.0" height="3.2" fill="#333" opacity="0.6"/>
<rect x="29.4" y="32.4" width="80.6" height="4.3" fill="#111" opacity="0.85"/>
<line x1="28" y1="39.2" x2="317" y2="39.2" stroke="#000" stroke-width="4.3" shape-rendering="crispEdges"/>
<rect x="31.0" y="42.8" width="92.5" height="3.6" fill="#1a1a1a" opacity="0.85"/>
<rect x="35.0" y="50.8" width="21.2" height="3.5" fill="#1a1a1a" opacity="0.85"/>
<rect x="35" y="56.39999999999999" width="7" height="7" fill="#000"/>
<rect x="43.2" y="58.2" width="62.4" height="3.5" fill="#000" opacity="0.85"/>
<rect x="35" y="63.8" width="7" height="7" fill="#000"/>
<rect x="43.2" y="65.8" width="79.3" height="3.2" fill="#858585" opacity="0.6"/>
<rect x="35" y="70.60000000000001" width="7" height="7" fill="#000"/>
<rect x="43.2" y="72.6" width="64.0" height="3.2" fill="#858585" opacity="0.6"/>
<rect x="35.0" y="79.7" width="53.9" height="3.5" fill="#1a1a1a" opacity="0.85"/>
<rect x="35" y="85.89999999999999" width="7" height="7" fill="#000"/>
<rect x="43.2" y="87.7" width="31.4" height="3.5" fill="#000" opacity="0.85"/>
<rect x="35" y="92.7" width="7" height="7" fill="#000"/>
<rect x="43.2" y="94.7" width="30.0" height="3.2" fill="#858585" opacity="0.6"/>
<rect x="35" y="99.89999999999999" width="7" height="7" fill="#000"/>
<rect x="43.2" y="101.9" width="43.4" height="3.2" fill="#858585" opacity="0.6"/>
<rect x="35" y="106.60000000000001" width="7" height="7" fill="#000"/>
<rect x="43.2" y="108.6" width="49.0" height="3.2" fill="#858585" opacity="0.6"/>
<rect x="35" y="114.7" width="7" height="7" fill="#000"/>
<rect x="43.2" y="116.7" width="59.8" height="3.2" fill="#858585" opacity="0.6"/>
<rect x="35" y="121.7" width="7" height="7" fill="#000"/>
<rect x="43.2" y="123.7" width="69.9" height="3.2" fill="#858585" opacity="0.6"/>
<rect x="35.0" y="130.4" width="63.9" height="3.5" fill="#1a1a1a" opacity="0.85"/>
<rect x="35" y="136.6" width="7" height="7" fill="#000"/>
<rect x="43.2" y="138.4" width="31.4" height="3.5" fill="#000" opacity="0.85"/>
<rect x="35" y="143.6" width="7" height="7" fill="#000"/>
<rect x="43.2" y="145.6" width="54.2" height="3.2" fill="#858585" opacity="0.6"/>
<rect x="35" y="150.59999999999997" width="7" height="7" fill="#000"/>
<rect x="43.2" y="152.6" width="38.8" height="3.2" fill="#858585" opacity="0.6"/>
<rect x="35" y="157.8" width="7" height="7" fill="#000"/>
<rect x="43.2" y="159.8" width="52.4" height="3.2" fill="#858585" opacity="0.6"/>
<rect x="35.0" y="167.6" width="55.7" height="3.5" fill="#1a1a1a" opacity="0.85"/>
<rect x="35" y="172.89999999999998" width="7" height="7" fill="#000"/>
<rect x="43.2" y="174.7" width="31.4" height="3.5" fill="#000" opacity="0.85"/>
<rect x="35" y="181.09999999999997" width="7" height="7" fill="#000"/>
<rect x="43.2" y="183.1" width="76.2" height="3.2" fill="#858585" opacity="0.6"/>
<rect x="35" y="188.09999999999997" width="7" height="7" fill="#000"/>
<rect x="43.2" y="190.1" width="66.6" height="3.2" fill="#858585" opacity="0.6"/>
<rect x="43.2" y="195.9" width="19.3" height="3.2" fill="#858585" opacity="0.6"/>
<rect x="35" y="200.89999999999998" width="7" height="7" fill="#000"/>
<rect x="43.2" y="202.9" width="43.1" height="3.2" fill="#858585" opacity="0.6"/>
<rect x="35" y="207.89999999999998" width="7" height="7" fill="#000"/>
<rect x="43.2" y="209.9" width="78.5" height="3.2" fill="#858585" opacity="0.6"/>
<rect x="35" y="214.89999999999998" width="7" height="7" fill="#000"/>
<rect x="43.2" y="216.9" width="59.8" height="3.2" fill="#858585" opacity="0.6"/>
<rect x="35" y="221.89999999999998" width="7" height="7" fill="#000"/>
<rect x="43.2" y="223.9" width="77.7" height="3.2" fill="#858585" opacity="0.6"/>
<rect x="43.2" y="229.7" width="73.1" height="3.2" fill="#858585" opacity="0.6"/>
<rect x="43.2" y="235.6" width="41.4" height="3.2" fill="#858585" opacity="0.6"/>
<rect x="35.0" y="242.5" width="17.7" height="3.5" fill="#1a1a1a" opacity="0.85"/>
<rect x="35" y="248.8" width="7" height="7" fill="#000"/>
<rect x="43.2" y="250.6" width="61.4" height="3.5" fill="#000" opacity="0.85"/>
<rect x="35" y="255.8" width="7" height="7" fill="#000"/>
<rect x="43.2" y="257.8" width="61.8" height="3.2" fill="#858585" opacity="0.6"/>
<rect x="35" y="262.8" width="7" height="7" fill="#000"/>
<rect x="43.2" y="264.8" width="60.7" height="3.2" fill="#858585" opacity="0.6"/>
<rect x="35.0" y="271.7" width="23.7" height="3.5" fill="#1a1a1a" opacity="0.85"/>
<rect x="35" y="278.0" width="7" height="7" fill="#000"/>
<rect x="43.2" y="279.8" width="61.4" height="3.5" fill="#000" opacity="0.85"/>
<rect x="35" y="285.0" width="7" height="7" fill="#000"/>
<rect x="43.2" y="287.0" width="51.0" height="3.2" fill="#858585" opacity="0.6"/>
<rect x="35" y="292.0" width="7" height="7" fill="#000"/>
<rect x="43.2" y="294.0" width="44.5" height="3.2" fill="#858585" opacity="0.6"/>
<rect x="134.0" y="42.5" width="23.6" height="3.5" fill="#1a1a1a" opacity="0.85"/>
<rect x="134" y="48.89999999999999" width="7" height="7" fill="#000"/>
<rect x="142.2" y="50.7" width="49.1" height="3.5" fill="#000" opacity="0.85"/>
<rect x="134" y="55.7" width="7" height="7" fill="#000"/>
<rect x="142.2" y="57.7" width="55.8" height="3.2" fill="#858585" opacity="0.6"/>
<rect x="134" y="62.7" width="7" height="7" fill="#000"/>
<rect x="142.2" y="64.7" width="63.5" height="3.2" fill="#858585" opacity="0.6"/>
<rect x="134" y="69.39999999999999" width="7" height="7" fill="#000"/>
<rect x="142.2" y="71.4" width="17.9" height="3.2" fill="#858585" opacity="0.6"/>
<rect x="134.0" y="79.2" width="27.7" height="3.5" fill="#1a1a1a" opacity="0.85"/>
<rect x="134" y="85.00000000000001" width="7" height="7" fill="#000"/>
<rect x="142.2" y="86.8" width="61.4" height="3.5" fill="#000" opacity="0.85"/>
<rect x="134" y="92.00000000000001" width="7" height="7" fill="#000"/>
<rect x="142.2" y="94.0" width="76.5" height="3.2" fill="#858585" opacity="0.6"/>
<rect x="134" y="99.2" width="7" height="7" fill="#000"/>
<rect x="142.2" y="101.2" width="70.0" height="3.2" fill="#858585" opacity="0.6"/>
<rect x="134.0" y="108.3" width="24.0" height="3.5" fill="#1a1a1a" opacity="0.85"/>
<rect x="134" y="113.39999999999999" width="7" height="7" fill="#000"/>
<rect x="142.2" y="115.2" width="61.4" height="3.5" fill="#000" opacity="0.85"/>
<rect x="134" y="120.60000000000001" width="7" height="7" fill="#000"/>
<rect x="142.2" y="122.6" width="62.6" height="3.2" fill="#858585" opacity="0.6"/>
<rect x="134" y="127.8" width="7" height="7" fill="#000"/>
<rect x="142.2" y="129.8" width="56.1" height="3.2" fill="#858585" opacity="0.6"/>
<rect x="134.0" y="137.6" width="18.9" height="3.5" fill="#1a1a1a" opacity="0.85"/>
<rect x="134" y="143.6" width="7" height="7" fill="#000"/>
<rect x="142.2" y="145.4" width="31.4" height="3.5" fill="#000" opacity="0.85"/>
<rect x="134" y="150.59999999999997" width="7" height="7" fill="#000"/>
<rect x="142.2" y="152.6" width="45.1" height="3.2" fill="#858585" opacity="0.6"/>
<rect x="134" y="157.8" width="7" height="7" fill="#000"/>
<rect x="142.2" y="159.8" width="38.5" height="3.2" fill="#858585" opacity="0.6"/>
<rect x="134" y="165.0" width="7" height="7" fill="#000"/>
<rect x="142.2" y="167.0" width="53.9" height="3.2" fill="#858585" opacity="0.6"/>
<rect x="134" y="172.0" width="7" height="7" fill="#000"/>
<rect x="142.2" y="174.0" width="47.3" height="3.2" fill="#858585" opacity="0.6"/>
<rect x="131.5" y="181.3" width="80.2" height="3.6" fill="#1a1a1a" opacity="0.85"/>
<rect x="134.0" y="189.6" width="21.2" height="3.5" fill="#1a1a1a" opacity="0.85"/>
<rect x="134" y="195.89999999999998" width="7" height="7" fill="#000"/>
<rect x="142.2" y="197.7" width="62.4" height="3.5" fill="#000" opacity="0.85"/>
<rect x="134" y="202.89999999999998" width="7" height="7" fill="#000"/>
<rect x="142.2" y="204.9" width="41.1" height="3.2" fill="#858585" opacity="0.6"/>
<rect x="134" y="209.89999999999998" width="7" height="7" fill="#000"/>
<rect x="142.2" y="211.9" width="44.5" height="3.2" fill="#858585" opacity="0.6"/>
<rect x="134.0" y="219.5" width="35.5" height="3.5" fill="#1a1a1a" opacity="0.85"/>
<rect x="134" y="225.09999999999997" width="7" height="7" fill="#000"/>
<rect x="142.2" y="226.9" width="26.0" height="3.5" fill="#000" opacity="0.85"/>
<rect x="134" y="232.7" width="7" height="7" fill="#000"/>
<rect x="142.2" y="234.7" width="69.4" height="3.2" fill="#858585" opacity="0.6"/>
<rect x="134" y="239.8" width="7" height="7" fill="#000"/>
<rect x="142.2" y="241.8" width="62.6" height="3.2" fill="#858585" opacity="0.6"/>
<rect x="134" y="246.8" width="7" height="7" fill="#000"/>
<rect x="142.2" y="248.8" width="72.6" height="3.2" fill="#858585" opacity="0.6"/>
<rect x="134" y="253.8" width="7" height="7" fill="#000"/>
<rect x="142.2" y="255.8" width="66.0" height="3.2" fill="#858585" opacity="0.6"/>
<rect x="134.0" y="263.4" width="46.7" height="3.5" fill="#1a1a1a" opacity="0.85"/>
<rect x="134" y="269.0" width="7" height="7" fill="#000"/>
<rect x="142.2" y="270.8" width="26.0" height="3.5" fill="#000" opacity="0.85"/>
<rect x="134" y="276.4" width="7" height="7" fill="#000"/>
<rect x="142.2" y="278.4" width="69.4" height="3.2" fill="#858585" opacity="0.6"/>
<rect x="134" y="283.4" width="7" height="7" fill="#000"/>
<rect x="142.2" y="285.4" width="62.6" height="3.2" fill="#858585" opacity="0.6"/>
<rect x="134" y="291.09999999999997" width="7" height="7" fill="#000"/>
<rect x="142.2" y="293.1" width="72.6" height="3.2" fill="#858585" opacity="0.6"/>
<rect x="134" y="298.09999999999997" width="7" height="7" fill="#000"/>
<rect x="142.2" y="300.1" width="66.0" height="3.2" fill="#858585" opacity="0.6"/>
<rect x="226.5" y="42.9" width="46.7" height="3.5" fill="#1a1a1a" opacity="0.85"/>
<rect x="226.5" y="48.89999999999999" width="7" height="7" fill="#000"/>
<rect x="234.7" y="50.7" width="48.8" height="3.5" fill="#000" opacity="0.85"/>
<rect x="226.5" y="56.39999999999999" width="7" height="7" fill="#000"/>
<rect x="234.7" y="58.4" width="63.2" height="3.2" fill="#858585" opacity="0.6"/>
<rect x="226.5" y="63.60000000000001" width="7" height="7" fill="#000"/>
<rect x="234.7" y="65.6" width="56.6" height="3.2" fill="#858585" opacity="0.6"/>
<rect x="226.5" y="71.00000000000001" width="7" height="7" fill="#000"/>
<rect x="234.7" y="73.0" width="66.6" height="3.2" fill="#858585" opacity="0.6"/>
<rect x="226.5" y="78.2" width="7" height="7" fill="#000"/>
<rect x="234.7" y="80.2" width="60.0" height="3.2" fill="#858585" opacity="0.6"/>
<rect x="226.5" y="87.6" width="16.1" height="3.5" fill="#1a1a1a" opacity="0.85"/>
<rect x="226.5" y="92.89999999999999" width="7" height="7" fill="#000"/>
<rect x="234.7" y="94.7" width="31.4" height="3.5" fill="#000" opacity="0.85"/>
<rect x="226.5" y="99.89999999999999" width="7" height="7" fill="#000"/>
<rect x="234.7" y="101.9" width="60.7" height="3.2" fill="#858585" opacity="0.6"/>
<rect x="226.5" y="107.10000000000001" width="7" height="7" fill="#000"/>
<rect x="234.7" y="109.1" width="54.1" height="3.2" fill="#858585" opacity="0.6"/>
<rect x="226.5" y="116.4" width="17.7" height="3.5" fill="#1a1a1a" opacity="0.85"/>
<rect x="226.5" y="122.89999999999999" width="7" height="7" fill="#000"/>
<rect x="234.7" y="124.7" width="61.4" height="3.5" fill="#000" opacity="0.85"/>
<rect x="226.5" y="130.1" width="7" height="7" fill="#000"/>
<rect x="234.7" y="132.1" width="60.7" height="3.2" fill="#858585" opacity="0.6"/>
<rect x="226.5" y="136.79999999999998" width="7" height="7" fill="#000"/>
<rect x="234.7" y="138.8" width="54.1" height="3.2" fill="#858585" opacity="0.6"/>
<rect x="226.5" y="145.5" width="23.7" height="3.5" fill="#1a1a1a" opacity="0.85"/>
<rect x="226.5" y="151.7" width="7" height="7" fill="#000"/>
<rect x="234.7" y="153.5" width="61.4" height="3.5" fill="#000" opacity="0.85"/>
<rect x="226.5" y="158.89999999999998" width="7" height="7" fill="#000"/>
<rect x="234.7" y="160.9" width="60.7" height="3.2" fill="#858585" opacity="0.6"/>
<rect x="226.5" y="165.8" width="7" height="7" fill="#000"/>
<rect x="234.7" y="167.8" width="54.1" height="3.2" fill="#858585" opacity="0.6"/>
<rect x="226.5" y="175.1" width="55.4" height="3.5" fill="#1a1a1a" opacity="0.85"/>
<rect x="226.5" y="180.89999999999998" width="7" height="7" fill="#000"/>
<rect x="234.7" y="182.7" width="61.4" height="3.5" fill="#000" opacity="0.85"/>
<rect x="226.5" y="188.3" width="7" height="7" fill="#000"/>
<rect x="234.7" y="190.3" width="60.7" height="3.2" fill="#858585" opacity="0.6"/>
<rect x="226.5" y="195.8" width="7" height="7" fill="#000"/>
<rect x="234.7" y="197.8" width="54.1" height="3.2" fill="#858585" opacity="0.6"/>
<rect x="226.5" y="204.4" width="24.0" height="3.5" fill="#1a1a1a" opacity="0.85"/>
<rect x="226.5" y="210.89999999999998" width="7" height="7" fill="#000"/>
<rect x="234.7" y="212.7" width="31.4" height="3.5" fill="#000" opacity="0.85"/>
<rect x="226.5" y="218.2" width="7" height="7" fill="#000"/>
<rect x="234.7" y="220.2" width="65.9" height="3.2" fill="#858585" opacity="0.6"/>
<rect x="226.5" y="224.89999999999998" width="7" height="7" fill="#000"/>
<rect x="234.7" y="226.9" width="65.9" height="3.2" fill="#858585" opacity="0.6"/>
<rect x="226.5" y="232.89999999999998" width="7" height="7" fill="#000"/>
<rect x="234.7" y="234.9" width="47.6" height="3.2" fill="#858585" opacity="0.6"/>
<rect x="226.5" y="239.8" width="7" height="7" fill="#000"/>
<rect x="234.7" y="241.8" width="42.2" height="3.2" fill="#858585" opacity="0.6"/>
<rect x="226.5" y="248.4" width="16.2" height="3.5" fill="#1a1a1a" opacity="0.85"/>
<rect x="226.5" y="254.5" width="7" height="7" fill="#000"/>
<rect x="234.7" y="256.3" width="31.4" height="3.5" fill="#000" opacity="0.85"/>
<rect x="226.5" y="261.8" width="7" height="7" fill="#000"/>
<rect x="234.7" y="263.8" width="19.3" height="3.2" fill="#858585" opacity="0.6"/>
<rect x="226.5" y="269.09999999999997" width="7" height="7" fill="#000"/>
<rect x="234.7" y="271.1" width="22.4" height="3.2" fill="#858585" opacity="0.6"/>
<rect x="29.4" y="309.8" width="59.4" height="4.3" fill="#111" opacity="0.85"/>
<line x1="28" y1="316.6" x2="317" y2="316.6" stroke="#000" stroke-width="4.3" shape-rendering="crispEdges"/>
<rect x="17.0" y="326.1" width="32.0" height="1.9" fill="#555" opacity="0.6"/>
<line x1="16" y1="440.8" x2="317" y2="440.8" stroke="#000" stroke-width="4.3" shape-rendering="crispEdges"/>
<rect x="84.5" y="443.2" width="164.0" height="2.2" fill="#333" opacity="0.6"/>
<rect x="153.3" y="449.3" width="28.0" height="2.9" fill="#333" opacity="0.6"/></svg>
<svg class="a" style="left:22px;top:227px" width="14" height="14" viewBox="0 0 14 14"><rect width="14" height="14" fill="#8ba8c9"/><path d="M3.8 4.2Q4.5 2.4 6.6 2.4Q9 2.5 9 4.6Q9 6.2 6.5 8.3L3.8 10.6H9.6" stroke="#fff" stroke-width="1.1" fill="none"/></svg>
<div class="a" id="status"></div>
<div class="st" style="left:4px">CAPS</div>
<div class="st" style="left:40px;color:#f2f2f2">NUM</div>
<div class="st" style="left:74px">SCRL</div>
<div class="st" style="left:112px">INS</div>
<div class="a" style="left:921px;top:607px;width:2px;height:2px;background:#151515"></div>
<div class="a" style="left:917px;top:611px;width:2px;height:2px;background:#151515"></div>
<div class="a" style="left:921px;top:611px;width:2px;height:2px;background:#151515"></div>
<div class="a" style="left:913px;top:615px;width:2px;height:2px;background:#151515"></div>
<div class="a" style="left:917px;top:615px;width:2px;height:2px;background:#151515"></div>
<div class="a" style="left:921px;top:615px;width:2px;height:2px;background:#151515"></div>
</body></html>
